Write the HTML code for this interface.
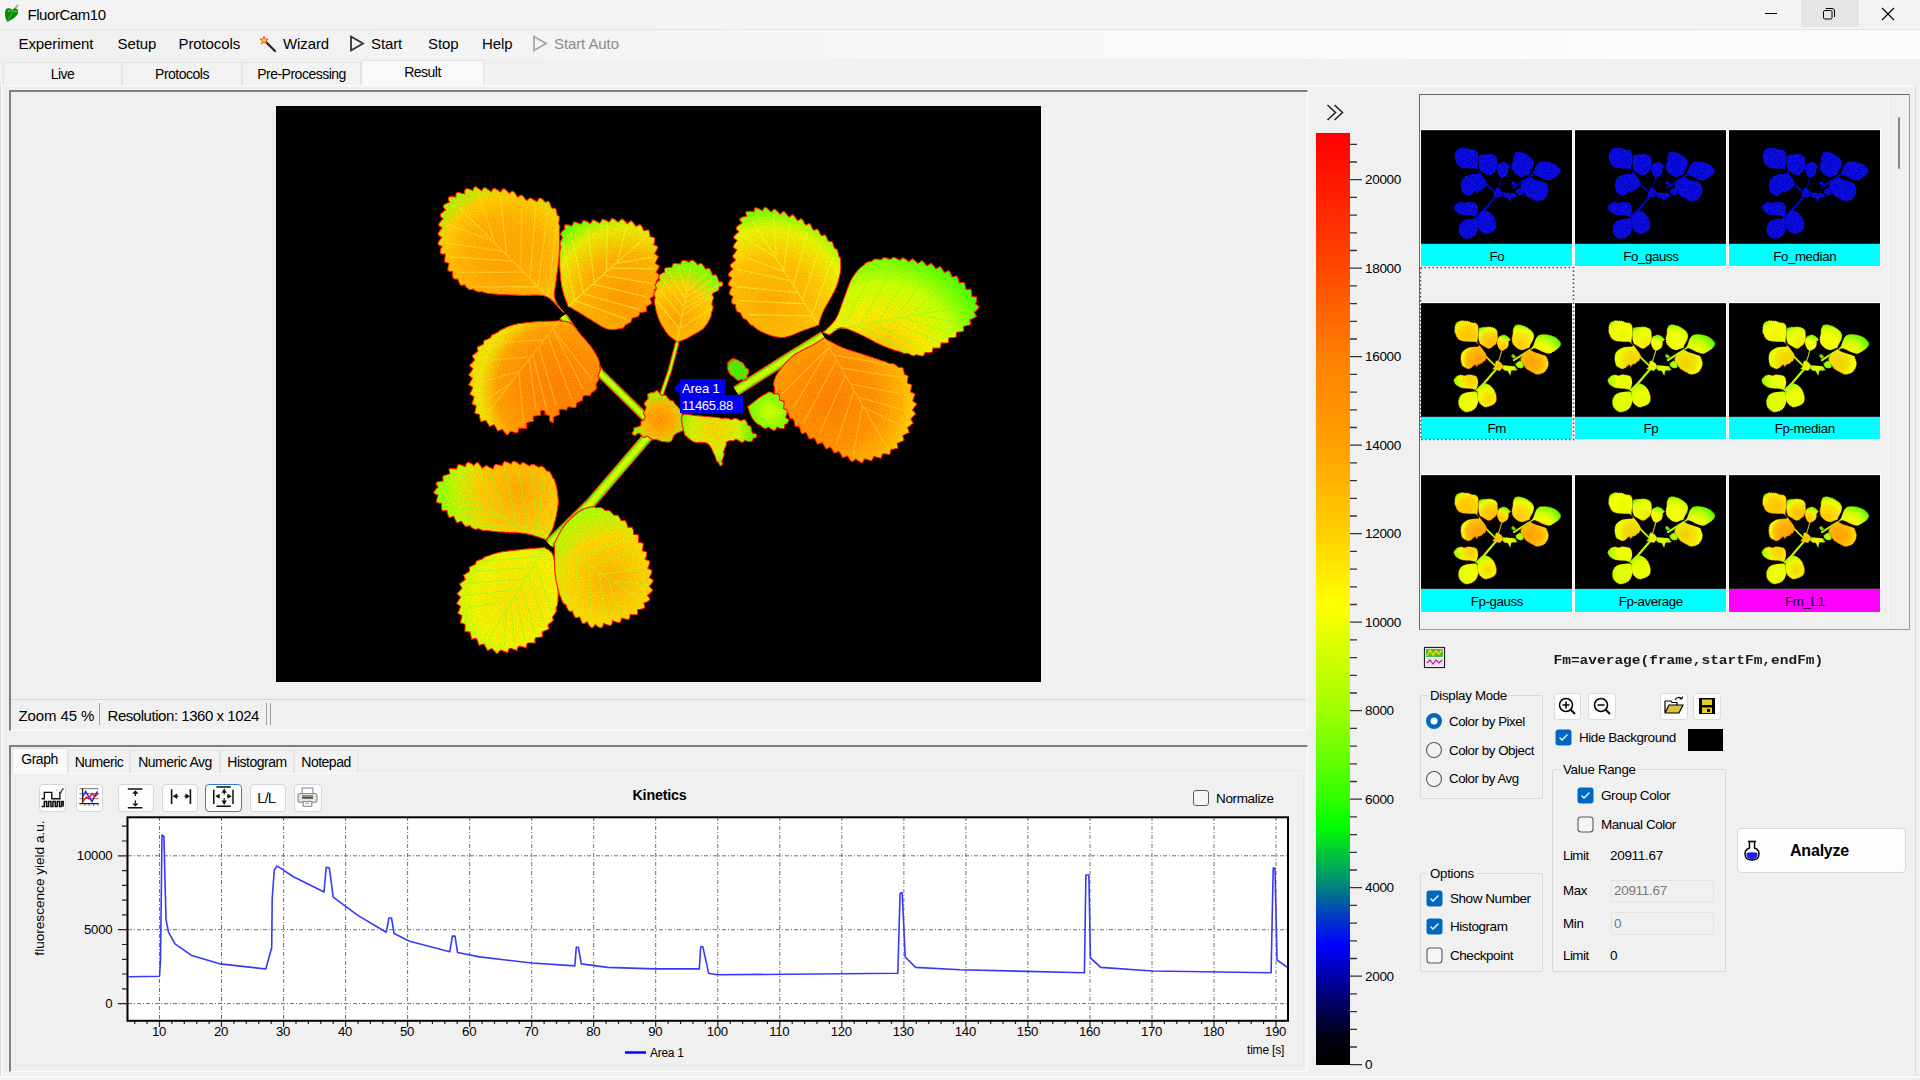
<!DOCTYPE html><html><head><meta charset="utf-8"><style>
html,body{margin:0;padding:0;}
body{width:1920px;height:1080px;overflow:hidden;position:relative;background:#f0f0f0;font-family:"Liberation Sans", sans-serif;}
.t{position:absolute;white-space:nowrap;line-height:1;}
.b{position:absolute;box-sizing:border-box;}
svg{position:absolute;overflow:visible;}
</style></head><body>
<svg width="0" height="0" style="position:absolute;left:0;top:0"><defs>
<radialGradient id="gA" gradientUnits="userSpaceOnUse" cx="229" cy="154" r="78"><stop offset="0" stop-color="#ffa000"/><stop offset="0.55" stop-color="#ffb000"/><stop offset="0.8" stop-color="#ffc800"/><stop offset="1" stop-color="#b0f000"/></radialGradient>
<radialGradient id="gB" gradientUnits="userSpaceOnUse" cx="349" cy="194" r="90"><stop offset="0" stop-color="#ff9800"/><stop offset="0.5" stop-color="#ffb000"/><stop offset="0.8" stop-color="#e8e800"/><stop offset="1" stop-color="#70ff00"/></radialGradient>
<radialGradient id="gC" gradientUnits="userSpaceOnUse" cx="284" cy="284" r="80"><stop offset="0" stop-color="#ff8000"/><stop offset="0.5" stop-color="#ff8c00"/><stop offset="0.8" stop-color="#ffa000"/><stop offset="1" stop-color="#f0e000"/></radialGradient>
<radialGradient id="gS" gradientUnits="userSpaceOnUse" cx="402" cy="214" r="55"><stop offset="0" stop-color="#ffa000"/><stop offset="0.6" stop-color="#ffc800"/><stop offset="1" stop-color="#80ff00"/></radialGradient>
<radialGradient id="gD" gradientUnits="userSpaceOnUse" cx="494" cy="199" r="95"><stop offset="0" stop-color="#ffa800"/><stop offset="0.5" stop-color="#ffc000"/><stop offset="0.8" stop-color="#e8f000"/><stop offset="1" stop-color="#70ff00"/></radialGradient>
<radialGradient id="gE" gradientUnits="userSpaceOnUse" cx="604" cy="254" r="110"><stop offset="0" stop-color="#ffb000"/><stop offset="0.4" stop-color="#f8e800"/><stop offset="0.7" stop-color="#c8ff00"/><stop offset="1" stop-color="#50ff00"/></radialGradient>
<radialGradient id="gF" gradientUnits="userSpaceOnUse" cx="554" cy="294" r="90"><stop offset="0" stop-color="#ff8000"/><stop offset="0.5" stop-color="#ff9000"/><stop offset="0.8" stop-color="#ffb000"/><stop offset="1" stop-color="#f8e000"/></radialGradient>
<radialGradient id="gG" gradientUnits="userSpaceOnUse" cx="244" cy="384" r="80"><stop offset="0" stop-color="#ffa800"/><stop offset="0.5" stop-color="#ffc800"/><stop offset="0.8" stop-color="#c8f000"/><stop offset="1" stop-color="#90ff00"/></radialGradient>
<radialGradient id="gH" gradientUnits="userSpaceOnUse" cx="244" cy="494" r="75"><stop offset="0" stop-color="#f8e000"/><stop offset="0.6" stop-color="#f0f000"/><stop offset="1" stop-color="#a8ff00"/></radialGradient>
<radialGradient id="gI" gradientUnits="userSpaceOnUse" cx="334" cy="474" r="75"><stop offset="0" stop-color="#ffb000"/><stop offset="0.6" stop-color="#f8d800"/><stop offset="1" stop-color="#a0ff00"/></radialGradient>
<radialGradient id="gsl" gradientUnits="userSpaceOnUse" cx="494" cy="306" r="25"><stop offset="0" stop-color="#d0ff00"/><stop offset="1" stop-color="#60ff00"/></radialGradient>
<radialGradient id="gbud" gradientUnits="userSpaceOnUse" cx="462" cy="264" r="15"><stop offset="0" stop-color="#40f000"/><stop offset="0.6" stop-color="#60e000"/><stop offset="1" stop-color="#ff3000"/></radialGradient>
<radialGradient id="gcrown" gradientUnits="userSpaceOnUse" cx="384" cy="314" r="26"><stop offset="0" stop-color="#ff9000"/><stop offset="0.6" stop-color="#ffb000"/><stop offset="1" stop-color="#a0f000"/></radialGradient>
<radialGradient id="gcrown2" gradientUnits="userSpaceOnUse" cx="439" cy="324" r="40"><stop offset="0" stop-color="#f8d000"/><stop offset="0.6" stop-color="#d0f000"/><stop offset="1" stop-color="#60f000"/></radialGradient>
<g id="plantMain">
<path d="M287.0,210.0 L324.0,267.0 L372.0,314.0" fill="none" stroke="#ff1c00" stroke-width="9.5" stroke-linecap="butt"/>
<path d="M287.0,210.0 L324.0,267.0 L372.0,314.0" fill="none" stroke="#60f000" stroke-width="7.1" stroke-linecap="butt"/>
<path d="M287.0,210.0 L324.0,267.0 L372.0,314.0" fill="none" stroke="#d0f800" stroke-width="4.26" stroke-linecap="butt"/>
<path d="M401.4,235.9 L394.0,264.0 L385.0,290.0" fill="none" stroke="#ff1c00" stroke-width="5" stroke-linecap="butt"/>
<path d="M401.4,235.9 L394.0,264.0 L385.0,290.0" fill="none" stroke="#60f000" stroke-width="2.6" stroke-linecap="butt"/>
<path d="M401.4,235.9 L394.0,264.0 L385.0,290.0" fill="none" stroke="#d0f800" stroke-width="1.56" stroke-linecap="butt"/>
<path d="M547.5,230.0 L512.0,252.0 L460.0,285.0" fill="none" stroke="#ff1c00" stroke-width="11" stroke-linecap="butt"/>
<path d="M547.5,230.0 L512.0,252.0 L460.0,285.0" fill="none" stroke="#60f000" stroke-width="8.6" stroke-linecap="butt"/>
<path d="M547.5,230.0 L512.0,252.0 L460.0,285.0" fill="none" stroke="#d0f800" stroke-width="5.159999999999999" stroke-linecap="butt"/>
<path d="M273.0,438.0 L314.2,397.7 L374.0,328.0" fill="none" stroke="#ff1c00" stroke-width="11.5" stroke-linecap="butt"/>
<path d="M273.0,438.0 L314.2,397.7 L374.0,328.0" fill="none" stroke="#60f000" stroke-width="9.1" stroke-linecap="butt"/>
<path d="M273.0,438.0 L314.2,397.7 L374.0,328.0" fill="none" stroke="#d0f800" stroke-width="5.46" stroke-linecap="butt"/>
<path d="M287.5,206.2 L288.6,207.3 L288.0,206.7 L286.9,205.6 L285.8,204.4 L284.8,203.2 L283.8,202.0 L282.7,200.8 L281.7,199.6 L280.6,198.4 L279.5,197.3 L278.4,196.1 L277.2,195.1 L276.0,194.0 L274.8,193.0 L273.5,192.1 L272.1,191.3 L270.7,190.7 L269.1,190.2 L267.6,189.8 L266.0,189.5 L264.5,189.3 L262.9,189.2 L261.3,189.2 L259.7,189.2 L258.1,189.2 L256.5,189.2 L254.9,189.3 L253.3,189.3 L251.8,189.4 L250.2,189.4 L248.6,189.5 L247.0,189.5 L245.4,189.4 L243.8,189.4 L242.2,189.3 L240.6,189.2 L239.1,189.2 L237.5,189.1 L235.9,189.1 L234.3,189.0 L232.7,189.0 L231.1,188.9 L229.5,188.8 L227.9,188.8 L226.4,188.7 L224.8,188.6 L223.2,188.5 L221.6,188.4 L220.0,188.2 L218.4,188.1 L216.9,187.9 L215.3,187.6 L213.7,187.5 L212.1,187.5 L210.5,187.2 L209.0,186.8 L207.4,186.4 L205.9,185.8 L204.3,186.0 L202.6,186.1 L201.1,185.6 L199.6,184.9 L198.2,184.1 L196.9,183.1 L195.1,183.5 L193.3,183.7 L192.0,182.8 L190.7,181.6 L189.6,180.3 L188.7,178.9 L186.6,179.3 L184.7,179.3 L183.7,177.9 L182.8,176.4 L182.2,174.8 L181.8,173.1 L179.4,173.2 L177.3,172.8 L176.8,171.1 L176.6,169.4 L176.5,167.5 L176.7,165.6 L173.9,165.4 L171.8,164.7 L171.7,162.9 L172.0,161.1 L172.4,159.3 L173.0,157.4 L170.1,156.7 L168.3,155.6 L168.5,153.9 L168.8,152.1 L169.0,150.2 L169.2,148.1 L166.2,148.1 L164.2,147.4 L164.1,145.6 L164.3,143.7 L165.0,142.0 L165.9,140.4 L163.1,139.2 L161.8,137.6 L162.5,136.0 L163.4,134.4 L164.4,132.8 L165.6,131.3 L162.9,129.6 L161.8,128.0 L162.6,126.4 L163.6,124.9 L164.7,123.4 L166.0,121.9 L163.3,120.1 L162.4,118.4 L163.3,116.9 L164.4,115.4 L165.7,114.0 L167.1,112.7 L164.6,110.6 L164.0,108.8 L165.1,107.4 L166.4,106.2 L167.9,105.0 L169.5,103.9 L167.3,101.4 L167.1,99.6 L168.4,98.4 L170.0,97.5 L171.7,96.7 L173.5,96.1 L172.0,93.0 L172.5,91.2 L174.2,90.7 L176.1,90.5 L177.9,90.7 L179.7,91.1 L179.9,87.7 L181.1,86.3 L182.9,86.5 L184.7,86.9 L186.6,87.3 L188.6,87.7 L188.7,84.1 L189.8,82.7 L191.6,82.7 L193.4,83.0 L195.1,83.7 L196.6,84.5 L197.9,81.2 L199.5,80.5 L201.1,81.3 L202.7,82.4 L204.1,83.6 L205.6,84.7 L207.5,81.7 L209.2,81.3 L210.6,82.3 L212.1,83.4 L213.6,84.6 L215.2,85.6 L217.0,82.6 L218.6,82.1 L220.1,82.9 L221.7,83.9 L223.2,85.1 L224.7,85.9 L226.5,82.9 L228.2,82.6 L229.7,83.6 L231.0,84.8 L232.3,86.3 L233.5,87.3 L236.0,85.0 L237.6,85.2 L238.8,86.6 L239.8,88.2 L240.8,89.9 L242.0,91.0 L244.7,89.0 L246.3,89.3 L247.4,90.6 L248.6,92.0 L249.8,93.5 L251.3,94.3 L253.6,91.9 L255.1,92.0 L256.6,93.0 L258.1,94.0 L259.8,95.0 L261.5,95.2 L262.7,92.3 L264.4,91.9 L266.0,92.7 L267.4,93.8 L268.3,95.2 L269.4,96.1 L272.1,95.0 L273.4,96.1 L274.1,97.6 L274.7,99.3 L275.2,101.0 L276.3,102.2 L278.8,102.0 L280.0,103.1 L280.6,104.7 L280.9,106.3 L281.0,107.9 L281.5,109.3 L283.3,110.6 L283.5,112.1 L283.3,113.8 L283.1,115.4 L282.8,117.0 L283.0,118.6 L283.9,120.1 L283.9,121.7 L283.7,123.3 L283.5,124.9 L283.4,126.5 L283.5,128.1 L283.8,129.7 L283.8,131.3 L283.7,132.8 L283.7,134.4 L283.7,136.0 L283.6,137.6 L283.6,139.2 L283.6,140.8 L283.5,142.4 L283.4,144.0 L283.4,145.5 L283.3,147.1 L283.2,148.7 L283.1,150.3 L283.0,151.9 L282.9,153.5 L282.7,155.1 L282.5,156.6 L282.4,158.2 L282.2,159.8 L282.0,161.4 L281.8,162.9 L281.6,164.5 L281.4,166.1 L281.1,167.7 L280.9,169.2 L280.7,170.8 L280.5,172.4 L280.3,174.0 L280.1,175.5 L279.9,177.1 L279.7,178.7 L279.5,180.3 L279.2,181.8 L278.9,183.4 L278.7,185.0 L278.4,186.5 L278.3,188.1 L278.4,189.7 L278.6,191.3 L279.1,192.8 L279.7,194.3 L280.4,195.7 L281.2,197.1 L282.0,198.4 L282.9,199.8 L283.7,201.1 L284.6,202.5 L285.5,203.7 L286.5,205.0Z" fill="url(#gA)" stroke="#ff1800" stroke-width="1.2"/>
<path d="M287.5,206.2 L182.7,101.0 M262.1,180.7 L196.2,180.8 M247.7,166.2 L181.6,166.3 M236.5,154.9 L174.6,151.0 M226.9,145.3 L169.4,136.9 M216.8,135.2 L169.4,116.8 M218.6,137.0 L202.6,87.3 M230.7,149.1 L224.2,90.0 M245.1,163.6 L245.6,97.6 M254.0,172.6 L259.7,101.3 M262.0,180.6 L271.9,105.2 M271.9,190.5 L281.0,115.9" stroke="#ffe040" stroke-opacity="0.5" stroke-width="1.3" fill="none"/>
<path d="M292.0,200.3 L291.9,201.3 L292.0,200.3 L291.5,198.8 L290.9,197.3 L290.3,195.8 L289.8,194.4 L289.2,192.9 L288.7,191.4 L288.1,189.9 L287.6,188.4 L287.2,186.9 L286.7,185.3 L286.4,183.8 L286.0,182.3 L285.7,180.7 L285.4,179.1 L285.2,177.6 L285.0,176.0 L284.8,174.4 L284.6,172.9 L284.4,171.3 L284.3,169.7 L284.1,168.1 L284.0,166.5 L283.9,165.0 L283.8,163.4 L283.7,161.8 L283.7,160.2 L283.6,158.6 L283.6,157.0 L283.6,155.5 L283.6,153.9 L283.6,152.3 L283.7,150.7 L283.7,149.1 L283.6,147.5 L283.7,145.9 L283.9,144.4 L284.3,142.8 L284.8,141.3 L284.5,139.7 L283.8,138.0 L284.1,136.4 L284.7,134.9 L285.5,133.4 L286.3,131.9 L285.8,130.2 L284.4,128.5 L285.0,126.9 L285.9,125.5 L287.1,124.3 L288.6,123.6 L288.6,121.8 L288.4,119.1 L290.2,118.7 L292.0,118.8 L293.8,119.2 L295.6,119.9 L296.7,118.2 L297.8,115.7 L299.5,116.0 L301.2,116.6 L303.0,117.3 L304.7,118.1 L306.0,116.5 L307.3,114.1 L309.0,114.6 L310.6,115.3 L312.3,116.3 L313.9,117.4 L315.4,115.9 L316.9,113.6 L318.5,114.2 L320.1,115.0 L321.8,115.9 L323.5,116.9 L325.0,115.3 L326.3,113.0 L327.9,113.4 L329.6,114.1 L331.3,115.0 L333.0,116.0 L334.4,114.4 L335.9,112.1 L337.5,112.7 L339.1,113.6 L340.6,114.7 L342.1,116.0 L343.8,114.6 L345.6,112.7 L347.1,113.6 L348.5,114.7 L349.9,116.0 L351.2,117.4 L353.0,116.3 L355.1,114.6 L356.5,115.7 L357.7,117.1 L358.8,118.6 L359.8,120.2 L361.8,119.4 L364.2,118.2 L365.3,119.5 L366.3,121.1 L367.1,122.8 L367.7,124.6 L369.9,124.2 L372.5,123.6 L373.3,125.1 L373.7,126.9 L374.0,128.7 L374.0,130.6 L376.1,131.0 L378.7,131.3 L378.9,133.1 L378.8,134.9 L378.4,136.7 L377.7,138.5 L379.7,139.5 L382.0,140.7 L381.5,142.4 L380.7,144.1 L379.8,145.7 L378.6,147.3 L380.3,148.8 L382.4,150.3 L381.9,151.9 L381.1,153.6 L380.3,155.3 L379.3,157.0 L381.2,158.4 L383.4,159.7 L382.9,161.4 L382.1,163.0 L381.2,164.7 L380.1,166.3 L381.9,167.8 L384.0,169.3 L383.4,170.9 L382.6,172.5 L381.5,174.1 L380.3,175.6 L381.9,177.2 L383.6,179.1 L382.6,180.6 L381.3,181.9 L379.8,183.0 L378.2,183.9 L379.1,186.1 L380.2,188.4 L378.9,189.5 L377.4,190.5 L375.8,191.5 L374.1,192.5 L375.1,194.7 L376.2,196.9 L374.9,198.1 L373.4,199.1 L371.7,200.0 L370.1,200.7 L370.6,202.9 L370.8,205.2 L369.1,205.9 L367.4,206.3 L365.7,206.6 L364.0,206.7 L363.3,208.7 L362.6,210.6 L361.0,211.0 L359.4,211.4 L357.7,211.9 L356.2,212.5 L355.6,214.3 L355.0,216.0 L353.6,216.9 L352.2,217.7 L350.8,218.4 L349.4,219.1 L348.5,220.6 L347.4,221.9 L345.8,222.3 L344.3,222.7 L342.7,222.9 L341.1,223.1 L339.6,223.6 L338.1,223.9 L336.5,223.8 L334.9,223.7 L333.3,223.5 L331.8,223.2 L330.2,222.7 L328.8,222.1 L327.3,221.5 L325.9,220.7 L324.6,219.9 L323.2,219.1 L321.9,218.3 L320.5,217.4 L319.2,216.6 L317.8,215.7 L316.5,214.9 L315.1,214.1 L313.8,213.3 L312.4,212.5 L311.1,211.7 L309.7,210.8 L308.4,210.0 L307.0,209.1 L305.7,208.3 L304.3,207.5 L303.0,206.6 L301.6,205.8 L300.3,205.0 L298.9,204.2 L297.5,203.4 L296.2,202.6 L294.8,201.8 L293.4,201.1Z" fill="url(#gB)" stroke="#ff1800" stroke-width="1.2"/>
<path d="M292.0,200.3 L367.4,132.9 M298.6,194.4 L286.6,136.3 M307.2,186.7 L294.7,125.1 M318.4,176.7 L311.4,121.4 M330.5,165.9 L331.1,119.1 M341.2,156.3 L350.7,119.4 M340.0,157.4 L376.9,151.1 M334.6,162.2 L377.5,162.6 M326.7,169.2 L376.7,177.7 M316.8,178.1 L370.8,190.9 M306.2,187.6 L362.7,203.4 M298.6,194.4 L349.7,212.8" stroke="#e8ff40" stroke-opacity="0.5" stroke-width="1.3" fill="none"/>
<path d="M282.7,214.8 L283.5,214.6 L283.5,214.8 L282.0,214.8 L280.4,214.9 L278.8,214.9 L277.2,215.0 L275.6,215.0 L274.0,215.1 L272.5,215.1 L270.9,215.2 L269.3,215.2 L267.7,215.3 L266.1,215.4 L264.5,215.4 L262.9,215.5 L261.4,215.6 L259.8,215.7 L258.2,215.8 L256.6,216.0 L255.0,216.1 L253.5,216.3 L251.9,216.4 L250.3,216.6 L248.7,216.8 L247.2,217.0 L245.6,217.2 L244.0,217.4 L242.4,217.7 L240.9,218.0 L239.3,218.3 L237.8,218.7 L236.3,219.1 L234.8,219.6 L233.3,220.1 L231.8,220.6 L230.3,221.3 L228.9,221.9 L227.4,222.6 L226.0,223.3 L224.6,224.0 L223.2,224.8 L222.0,225.9 L220.7,226.7 L219.2,227.4 L217.8,228.1 L216.2,228.7 L215.2,229.9 L214.4,231.5 L213.0,232.3 L211.5,233.0 L210.0,233.6 L208.3,234.1 L207.6,235.8 L207.4,237.8 L206.0,238.7 L204.5,239.4 L202.9,240.1 L201.2,240.9 L201.2,242.9 L201.8,245.1 L200.6,246.3 L199.2,247.3 L197.7,248.4 L196.1,249.6 L197.0,251.6 L198.6,253.7 L197.5,255.1 L196.3,256.4 L194.9,257.7 L193.5,259.1 L194.9,261.0 L196.7,262.8 L195.9,264.3 L194.8,265.8 L193.7,267.3 L192.5,268.9 L194.2,270.5 L196.2,272.1 L195.5,273.7 L194.6,275.3 L193.7,276.9 L192.6,278.6 L194.4,280.1 L196.6,281.5 L196.0,283.1 L195.3,284.8 L194.5,286.5 L193.6,288.3 L195.7,289.6 L197.9,290.8 L197.5,292.4 L197.0,294.2 L196.4,296.0 L195.7,297.8 L197.8,298.9 L200.1,299.9 L199.8,301.6 L199.4,303.4 L199.0,305.3 L198.5,307.2 L200.9,308.0 L203.3,308.5 L203.5,310.1 L203.7,311.9 L204.1,313.8 L204.8,315.8 L207.2,315.2 L209.5,314.5 L210.5,315.8 L211.6,317.3 L212.5,319.0 L213.4,320.7 L215.7,319.6 L218.0,318.8 L219.0,320.2 L219.9,321.8 L220.8,323.5 L221.6,325.3 L224.0,324.3 L226.2,323.4 L227.3,324.7 L228.4,326.1 L229.7,327.6 L231.3,329.1 L233.2,327.2 L234.6,325.3 L236.1,325.8 L237.9,326.3 L239.8,326.7 L241.8,327.2 L242.4,324.6 L243.0,322.4 L244.7,322.2 L246.6,322.3 L248.5,322.3 L250.6,322.2 L250.4,319.5 L250.4,317.2 L252.0,316.5 L253.7,316.0 L255.6,315.7 L257.5,315.6 L257.3,312.9 L257.5,310.6 L259.1,310.1 L260.9,309.8 L262.8,309.5 L264.7,309.5 L264.6,306.8 L265.2,304.6 L267.1,304.6 L268.8,305.5 L269.0,307.0 L268.7,308.7 L271.4,309.1 L273.5,309.9 L273.5,311.6 L273.4,313.4 L274.0,315.6 L277.4,316.6 L277.5,313.6 L277.3,311.5 L278.8,310.6 L280.4,309.8 L282.2,309.1 L283.9,308.5 L283.1,305.9 L283.3,303.8 L285.1,303.2 L286.9,303.3 L288.6,303.7 L290.3,304.4 L291.5,302.1 L292.9,300.7 L294.5,301.1 L296.2,301.5 L298.1,301.7 L300.1,301.6 L300.3,299.0 L300.7,297.1 L302.1,296.4 L303.7,295.6 L305.3,294.9 L306.8,294.2 L306.7,291.9 L307.3,290.2 L309.0,289.6 L310.7,289.5 L312.4,289.7 L314.1,290.0 L315.1,287.9 L316.0,286.4 L317.3,285.7 L318.6,284.7 L319.8,283.5 L321.0,282.1 L320.2,280.2 L320.1,278.5 L320.8,277.1 L321.6,275.6 L322.4,274.2 L323.1,272.7 L322.5,270.9 L322.4,269.3 L323.0,267.8 L323.5,266.3 L324.0,264.7 L324.4,263.2 L324.0,261.5 L323.8,260.0 L323.8,258.4 L323.6,256.8 L323.2,255.3 L322.7,253.8 L322.1,252.3 L321.4,250.9 L320.7,249.5 L319.9,248.1 L319.1,246.7 L318.3,245.4 L317.4,244.0 L316.5,242.7 L315.6,241.4 L314.7,240.1 L313.7,238.9 L312.7,237.6 L311.7,236.4 L310.7,235.2 L309.6,234.0 L308.6,232.8 L307.5,231.6 L306.5,230.5 L305.4,229.3 L304.4,228.1 L303.4,226.8 L302.4,225.6 L301.4,224.3 L300.5,223.1 L299.5,221.8 L298.5,220.6 L297.4,219.4 L296.3,218.3 L295.0,217.4 L293.6,216.6 L292.1,216.1 L290.6,215.7 L289.0,215.4 L287.4,215.2 L285.9,215.1 L284.3,215.0Z" fill="url(#gC)" stroke="#ff1800" stroke-width="1.2"/>
<path d="M282.7,214.8 L212.2,305.9 M267.9,233.9 L212.8,236.9 M254.9,250.7 L202.3,255.6 M243.5,265.4 L199.8,277.2 M234.1,277.6 L202.4,298.7 M242.8,266.4 L247.5,315.6 M253.2,253.0 L260.0,303.9 M256.6,248.5 L271.2,305.5 M262.7,240.7 L280.4,300.0 M271.7,229.0 L295.7,293.2 M276.6,222.7 L307.1,282.7 M276.6,222.7 L316.1,273.6" stroke="#ffd040" stroke-opacity="0.5" stroke-width="1.3" fill="none"/>
<path d="M401.4,235.9 L401.7,236.2 L400.4,235.2 L399.1,234.4 L397.8,233.5 L396.5,232.6 L395.2,231.6 L394.0,230.6 L392.8,229.5 L391.7,228.3 L390.8,227.1 L389.8,225.8 L388.9,224.5 L388.0,223.2 L387.2,221.8 L386.3,220.5 L385.5,219.1 L384.8,217.7 L384.1,216.2 L383.4,214.8 L382.8,213.3 L382.2,211.9 L381.7,210.4 L381.2,208.8 L380.7,207.3 L380.3,205.8 L379.9,204.3 L379.6,202.7 L379.4,201.1 L379.0,199.6 L378.4,198.0 L378.3,196.4 L378.4,194.8 L378.6,193.2 L379.1,191.7 L378.4,190.1 L377.7,188.4 L378.1,186.8 L378.8,185.3 L379.6,183.9 L380.7,182.5 L379.8,180.7 L379.2,178.8 L380.1,177.4 L381.2,176.1 L382.4,174.9 L383.8,173.8 L382.9,171.7 L382.7,169.8 L383.9,168.6 L385.3,167.6 L386.8,166.7 L388.4,166.1 L388.2,163.8 L388.9,162.1 L390.5,161.5 L392.2,161.3 L394.0,161.2 L395.7,161.2 L396.4,159.0 L397.5,157.5 L399.2,157.4 L400.9,157.5 L402.7,157.6 L404.5,157.8 L405.3,155.5 L406.6,154.3 L408.3,154.4 L410.0,154.7 L411.6,155.3 L413.0,156.2 L414.8,154.3 L416.5,153.9 L418.0,154.9 L419.3,156.0 L420.5,157.2 L421.6,158.6 L423.9,157.3 L425.6,157.5 L426.8,158.7 L427.8,160.1 L428.8,161.5 L429.5,163.1 L432.1,162.2 L433.7,162.8 L434.6,164.3 L435.3,165.8 L436.0,167.5 L436.6,169.1 L439.3,168.6 L440.7,169.5 L441.4,171.0 L442.0,172.6 L442.6,174.3 L443.2,175.9 L445.8,175.7 L447.0,177.0 L446.9,178.8 L446.0,180.2 L444.5,180.7 L443.1,181.1 L442.9,183.8 L441.8,185.0 L440.3,185.5 L438.6,186.1 L437.0,187.2 L436.1,188.7 L437.6,190.8 L437.6,192.3 L437.0,193.9 L436.5,195.5 L436.1,197.1 L436.0,198.7 L437.2,200.3 L437.2,201.9 L436.8,203.5 L436.3,205.0 L435.7,206.5 L435.3,208.0 L435.3,209.7 L434.7,211.1 L434.0,212.6 L433.3,214.0 L432.6,215.4 L431.8,216.8 L430.9,218.2 L430.0,219.5 L429.0,220.7 L428.0,221.9 L426.8,223.0 L425.5,223.9 L424.2,224.8 L422.9,225.7 L421.5,226.5 L420.1,227.3 L418.7,228.1 L417.3,228.8 L416.0,229.6 L414.6,230.4 L413.2,231.2 L411.8,232.0 L410.4,232.7 L408.9,233.4 L407.5,234.0 L406.0,234.6 L404.5,235.1 L403.0,235.5Z" fill="url(#gS)" stroke="#ff1800" stroke-width="1.2"/>
<path d="M401.4,235.9 L414.6,161.2 M403.7,223.0 L380.8,194.8 M405.8,211.0 L382.5,182.7 M407.6,200.7 L386.2,172.8 M409.1,192.4 L392.1,165.2 M410.3,185.8 L401.7,160.2 M410.1,186.6 L431.4,166.2 M409.2,191.9 L437.5,172.8 M408.2,197.5 L442.5,179.4 M407.3,202.8 L440.3,184.5 M406.1,209.6 L434.5,190.5 M403.7,222.7 L433.5,203.8" stroke="#f0f040" stroke-opacity="0.5" stroke-width="1.3" fill="none"/>
<path d="M542.6,219.0 L543.3,219.4 L542.6,219.0 L541.1,219.5 L539.7,220.1 L538.2,220.7 L536.7,221.2 L535.2,221.8 L533.7,222.3 L532.2,222.9 L530.7,223.4 L529.2,223.9 L527.7,224.5 L526.2,225.0 L524.7,225.6 L523.3,226.2 L521.8,226.8 L520.3,227.5 L518.9,228.1 L517.4,228.7 L515.9,229.3 L514.4,229.8 L512.9,230.3 L511.4,230.7 L509.8,231.1 L508.3,231.3 L506.7,231.5 L505.1,231.5 L503.5,231.4 L501.9,231.2 L500.4,231.0 L498.8,230.7 L497.3,230.3 L495.7,229.9 L494.2,229.4 L492.7,228.9 L491.2,228.3 L489.8,227.7 L488.3,227.1 L486.8,226.4 L485.4,225.8 L484.0,225.0 L482.6,224.2 L481.3,223.4 L480.0,222.5 L478.7,221.5 L477.6,220.4 L476.2,219.6 L474.7,218.9 L473.6,217.8 L472.5,216.6 L471.5,215.3 L470.6,213.9 L469.0,213.3 L467.4,212.6 L466.5,211.3 L465.7,209.9 L465.0,208.4 L464.4,206.8 L462.6,206.3 L460.9,205.6 L460.2,204.1 L459.8,202.5 L459.5,200.8 L459.5,199.0 L457.4,198.3 L455.8,197.3 L455.6,195.6 L455.8,193.9 L456.2,192.2 L456.8,190.5 L454.6,189.3 L453.1,187.9 L453.4,186.3 L454.0,184.6 L454.8,182.9 L455.7,181.3 L453.4,179.9 L451.9,178.3 L452.6,176.7 L453.5,175.1 L454.6,173.5 L455.8,172.0 L453.3,170.3 L452.1,168.6 L453.0,167.1 L454.1,165.6 L455.4,164.3 L456.9,163.1 L454.7,160.9 L454.0,159.0 L455.2,157.7 L456.6,156.5 L458.1,155.3 L459.6,154.0 L457.3,151.8 L456.5,150.0 L457.5,148.6 L458.6,147.1 L459.7,145.5 L460.9,143.9 L458.1,142.3 L457.1,140.7 L457.8,139.1 L458.8,137.5 L459.9,136.0 L461.1,134.5 L458.3,132.7 L457.6,131.0 L458.6,129.5 L459.9,128.2 L461.3,126.9 L462.8,125.7 L460.4,123.4 L460.0,121.6 L461.2,120.3 L462.7,119.1 L464.3,118.1 L465.9,117.1 L463.8,114.4 L463.8,112.6 L465.3,111.6 L467.0,110.8 L468.7,110.4 L470.6,110.1 L469.6,106.7 L470.6,105.2 L472.4,105.0 L474.2,105.1 L476.1,105.5 L477.8,106.0 L478.4,102.6 L479.8,101.6 L481.6,102.1 L483.3,102.8 L484.9,103.8 L486.3,104.7 L488.0,101.7 L489.7,101.2 L491.2,102.2 L492.6,103.4 L493.9,104.8 L495.3,105.9 L497.5,103.2 L499.2,103.1 L500.5,104.3 L501.8,105.6 L503.1,107.0 L504.4,108.1 L506.8,105.6 L508.5,105.6 L509.7,106.9 L510.9,108.3 L512.1,109.9 L513.3,110.9 L515.9,108.7 L517.5,108.9 L518.7,110.3 L519.7,111.8 L520.7,113.5 L521.9,114.6 L524.7,112.6 L526.2,113.1 L527.2,114.6 L528.1,116.3 L528.9,118.0 L530.0,119.1 L533.0,117.5 L534.4,118.2 L535.3,119.7 L536.1,121.4 L536.8,123.1 L538.0,124.2 L540.8,122.9 L542.2,123.7 L543.1,125.3 L543.9,126.8 L544.6,128.5 L545.9,129.5 L548.5,128.7 L549.8,129.6 L550.6,131.1 L551.4,132.7 L552.0,134.3 L553.1,135.3 L555.6,135.2 L556.6,136.5 L557.2,138.0 L557.7,139.6 L558.2,141.2 L559.1,142.5 L561.0,143.2 L561.7,144.6 L562.1,146.2 L562.4,147.8 L562.7,149.4 L563.3,150.8 L564.5,152.2 L564.8,153.7 L564.8,155.3 L564.8,156.9 L564.8,158.5 L564.9,160.1 L565.0,161.7 L564.8,163.3 L564.6,164.9 L564.4,166.4 L564.1,168.0 L563.8,169.6 L563.4,171.1 L563.0,172.6 L562.6,174.2 L562.2,175.7 L561.7,177.2 L561.2,178.7 L560.7,180.2 L560.1,181.7 L559.4,183.2 L558.8,184.6 L558.1,186.0 L557.3,187.4 L556.5,188.8 L555.8,190.2 L555.0,191.6 L554.2,193.0 L553.5,194.4 L552.7,195.8 L551.9,197.2 L551.1,198.5 L550.3,199.9 L549.5,201.3 L548.7,202.7 L548.0,204.1 L547.3,205.5 L546.6,206.9 L546.0,208.4 L545.5,209.9 L545.0,211.4 L544.5,212.9 L544.0,214.4 L543.5,216.0 L543.1,217.5Z" fill="url(#gD)" stroke="#ff1800" stroke-width="1.2"/>
<path d="M542.6,219.0 L476.6,115.5 M536.9,210.0 L471.4,208.5 M529.1,197.9 L463.0,194.5 M522.0,186.8 L460.2,180.6 M514.3,174.6 L460.5,163.3 M508.6,165.7 L463.2,149.0 M499.6,151.5 L463.9,128.7 M500.3,152.7 L497.6,108.8 M507.6,164.1 L513.9,114.5 M517.4,179.5 L531.7,124.8 M526.5,193.7 L545.9,135.7 M536.0,208.6 L557.7,149.2" stroke="#e8ff40" stroke-opacity="0.5" stroke-width="1.3" fill="none"/>
<path d="M547.3,226.2 L546.1,227.0 L547.3,226.2 L548.4,225.1 L549.5,224.0 L550.7,222.9 L551.8,221.8 L553.0,220.7 L554.1,219.6 L555.2,218.5 L556.2,217.3 L557.3,216.1 L558.3,214.9 L559.2,213.6 L560.0,212.2 L560.8,210.8 L561.5,209.4 L562.1,208.0 L562.7,206.5 L563.3,205.0 L563.8,203.5 L564.4,202.0 L564.9,200.5 L565.4,199.0 L565.9,197.5 L566.5,196.1 L567.1,194.6 L567.6,193.1 L568.2,191.6 L568.8,190.1 L569.3,188.6 L569.8,187.1 L570.3,185.7 L570.8,184.2 L571.4,182.7 L571.9,181.2 L572.5,179.7 L573.1,178.2 L573.7,176.8 L574.3,175.3 L575.0,173.9 L575.8,172.5 L576.6,171.1 L577.5,169.8 L578.4,168.5 L579.3,167.2 L580.3,166.0 L581.3,164.8 L582.3,163.5 L583.4,162.4 L584.6,161.3 L585.8,160.3 L587.2,159.5 L588.3,158.4 L589.3,157.1 L590.8,156.4 L592.3,155.8 L593.8,155.4 L595.4,155.2 L596.8,154.3 L598.1,153.1 L599.7,152.9 L601.3,153.0 L602.9,153.2 L604.6,153.6 L606.1,152.7 L607.5,151.4 L609.1,151.6 L610.8,152.0 L612.3,152.6 L613.9,153.3 L615.5,152.5 L617.1,151.1 L618.7,151.5 L620.3,152.2 L621.8,153.1 L623.3,154.1 L624.9,153.2 L626.7,151.6 L628.2,152.2 L629.7,153.1 L631.2,154.2 L632.6,155.4 L634.3,154.4 L636.2,152.6 L637.7,153.4 L639.1,154.6 L640.5,155.9 L641.8,157.3 L643.6,156.2 L645.7,154.4 L647.1,155.4 L648.4,156.7 L649.6,158.1 L650.8,159.7 L652.7,158.7 L654.9,157.1 L656.2,158.2 L657.4,159.5 L658.6,161.0 L659.7,162.6 L661.7,161.8 L663.9,160.3 L665.2,161.5 L666.3,163.0 L667.3,164.6 L668.2,166.3 L670.3,165.6 L672.7,164.4 L673.8,165.8 L674.7,167.4 L675.5,169.1 L676.1,170.9 L678.3,170.5 L680.8,169.8 L681.7,171.3 L682.3,173.0 L682.9,174.8 L683.3,176.7 L685.5,176.6 L688.1,176.1 L688.8,177.7 L689.3,179.5 L689.7,181.3 L690.0,183.2 L692.2,183.2 L694.8,183.0 L695.4,184.7 L695.7,186.5 L695.9,188.3 L695.9,190.2 L698.1,190.6 L700.7,190.9 L700.9,192.6 L700.8,194.4 L700.3,196.2 L699.4,197.8 L701.3,199.0 L703.3,200.7 L702.5,202.3 L701.3,203.7 L699.9,205.0 L698.3,206.0 L699.4,208.0 L700.5,210.3 L699.1,211.5 L697.5,212.3 L695.8,213.1 L694.0,213.6 L694.3,215.8 L694.8,218.4 L693.3,219.1 L691.5,219.7 L689.7,220.0 L687.8,220.2 L687.8,222.6 L687.8,225.1 L686.2,225.6 L684.4,225.9 L682.5,226.1 L680.6,226.2 L680.4,228.5 L680.3,231.0 L678.6,231.5 L676.8,231.7 L674.9,231.8 L673.0,231.8 L672.8,234.1 L672.6,236.7 L670.9,237.0 L669.1,237.1 L667.2,237.1 L665.2,237.0 L664.9,239.4 L664.5,241.9 L662.8,242.1 L661.0,242.1 L659.1,242.1 L657.3,242.0 L656.7,244.3 L656.1,246.4 L654.4,246.7 L652.7,246.8 L651.0,246.8 L649.2,246.6 L648.3,248.4 L647.1,250.1 L645.4,250.0 L643.7,249.7 L642.1,249.2 L640.6,248.6 L639.0,249.5 L637.3,250.1 L635.8,249.5 L634.3,248.8 L632.9,248.0 L631.5,247.3 L629.8,247.5 L628.1,247.6 L626.6,247.0 L625.1,246.4 L623.7,245.7 L622.2,245.2 L620.6,245.0 L619.1,244.6 L617.6,244.0 L616.1,243.5 L614.6,242.9 L613.1,242.4 L611.6,241.8 L610.2,241.2 L608.7,240.6 L607.2,240.0 L605.8,239.4 L604.3,238.8 L602.9,238.1 L601.5,237.4 L600.1,236.7 L598.6,235.9 L597.2,235.2 L595.9,234.4 L594.5,233.7 L593.1,232.9 L591.7,232.2 L590.3,231.5 L588.9,230.7 L587.4,230.0 L586.0,229.3 L584.6,228.7 L583.1,228.0 L581.7,227.4 L580.2,226.7 L578.8,226.1 L577.3,225.4 L575.9,224.8 L574.4,224.2 L572.9,223.6 L571.4,223.1 L569.9,222.6 L568.4,222.2 L566.8,221.9 L565.3,221.8 L563.7,222.0 L562.2,222.5 L560.8,223.2 L559.5,224.2 L558.3,225.2 L557.2,226.3 L556.0,227.3 L554.6,228.2 L553.1,228.5 L551.5,228.3 L550.1,227.8 L548.7,227.0Z" fill="url(#gE)" stroke="#ff1800" stroke-width="1.2"/>
<path d="M547.3,226.2 L689.3,199.5 M565.9,222.7 L600.0,159.6 M584.1,219.3 L618.9,159.0 M602.6,215.8 L638.4,161.2 M618.1,212.9 L655.2,165.4 M634.1,209.9 L673.2,173.3 M645.2,207.8 L686.7,184.0 M640.0,208.8 L687.6,217.4 M625.9,211.4 L674.9,227.4 M612.5,214.0 L662.6,235.5 M596.8,216.9 L647.8,243.6 M582.3,219.6 L633.4,246.7" stroke="#80ff30" stroke-opacity="0.5" stroke-width="1.3" fill="none"/>
<path d="M547.9,232.1 L548.4,231.7 L547.1,232.6 L545.8,233.5 L544.4,234.3 L543.1,235.2 L541.8,236.0 L540.4,236.9 L539.0,237.7 L537.7,238.5 L536.3,239.3 L534.9,240.0 L533.5,240.7 L532.1,241.4 L530.6,242.1 L529.2,242.8 L527.8,243.5 L526.4,244.2 L525.0,244.9 L523.6,245.7 L522.2,246.4 L520.8,247.3 L519.5,248.1 L518.2,249.1 L517.0,250.0 L515.7,251.0 L514.5,252.1 L513.4,253.1 L512.2,254.2 L511.1,255.3 L510.0,256.5 L508.9,257.6 L507.9,258.8 L506.8,260.0 L505.8,261.3 L504.9,262.5 L503.9,263.8 L503.0,265.1 L502.1,266.4 L501.2,267.7 L500.3,269.0 L499.6,270.4 L499.1,271.9 L498.6,273.4 L498.1,274.9 L497.7,276.5 L497.4,278.1 L497.7,279.7 L498.4,281.2 L498.5,282.8 L498.5,284.4 L498.6,286.0 L498.6,287.6 L499.5,289.0 L500.9,290.2 L501.2,291.8 L501.5,293.4 L501.8,295.0 L502.0,296.7 L503.4,297.8 L505.3,298.4 L505.9,299.9 L506.5,301.4 L507.1,303.0 L507.5,304.7 L509.1,305.4 L511.2,305.7 L512.0,307.2 L512.6,308.7 L513.1,310.4 L513.4,312.1 L515.1,312.8 L517.3,313.1 L517.9,314.7 L518.3,316.3 L518.6,318.1 L518.8,319.9 L520.6,320.6 L523.1,320.6 L523.7,322.1 L524.2,323.7 L524.7,325.5 L525.3,327.5 L527.3,327.5 L529.9,326.7 L530.8,328.1 L531.6,329.7 L532.4,331.4 L533.1,333.2 L535.2,332.9 L537.8,331.8 L538.8,333.1 L539.7,334.7 L540.6,336.4 L541.3,338.2 L543.4,337.8 L545.9,336.6 L547.0,337.9 L547.9,339.5 L548.8,341.1 L549.7,342.9 L551.8,342.4 L554.2,341.1 L555.3,342.4 L556.3,343.9 L557.3,345.5 L558.2,347.3 L560.2,346.7 L562.7,345.5 L563.8,346.8 L564.8,348.3 L565.7,350.0 L566.5,351.7 L568.6,351.2 L571.0,350.0 L572.2,351.2 L573.2,352.7 L574.3,354.2 L575.5,355.8 L577.6,354.9 L579.5,353.0 L580.9,353.9 L582.4,354.9 L584.0,355.9 L585.8,356.9 L587.3,355.3 L588.5,352.9 L590.1,353.2 L591.9,353.8 L593.7,354.4 L595.5,355.1 L596.7,353.3 L597.6,350.7 L599.3,350.9 L601.1,351.3 L602.9,351.8 L604.8,352.4 L605.8,350.5 L606.5,347.8 L608.2,347.9 L610.0,348.0 L611.9,348.3 L613.9,348.5 L614.5,346.4 L614.7,343.7 L616.3,343.3 L618.0,343.0 L619.9,342.7 L621.9,342.3 L621.9,340.1 L621.3,337.5 L622.8,336.7 L624.4,336.0 L626.2,335.3 L628.1,334.6 L627.7,332.5 L626.8,329.9 L628.2,329.0 L629.8,328.1 L631.5,327.3 L633.3,326.4 L632.7,324.3 L631.5,321.9 L632.7,320.8 L634.1,319.7 L635.7,318.5 L637.3,317.4 L636.3,315.4 L634.8,313.2 L635.8,311.9 L637.0,310.6 L638.4,309.3 L639.8,307.9 L638.6,306.0 L636.7,304.2 L637.5,302.7 L638.5,301.2 L639.6,299.6 L640.7,298.0 L639.1,296.4 L636.8,295.0 L637.2,293.5 L637.8,291.7 L638.4,289.9 L639.1,288.1 L637.1,287.0 L634.6,286.1 L634.8,284.4 L635.1,282.6 L635.5,280.8 L635.9,278.9 L633.9,278.0 L631.5,277.2 L631.5,275.5 L631.7,273.7 L632.0,272.0 L632.3,270.2 L630.5,269.1 L628.4,268.3 L628.2,266.7 L627.9,265.0 L627.5,263.3 L626.8,261.7 L624.8,261.4 L622.8,261.5 L621.6,260.5 L620.4,259.5 L619.0,258.5 L617.6,257.6 L615.9,257.7 L614.2,257.9 L612.8,257.2 L611.3,256.5 L609.9,255.8 L608.4,255.2 L606.9,254.9 L605.3,254.5 L603.8,253.9 L602.4,253.4 L600.9,252.9 L599.3,252.4 L597.8,251.9 L596.3,251.4 L594.8,250.9 L593.3,250.4 L591.8,249.9 L590.3,249.4 L588.8,248.9 L587.3,248.4 L585.8,247.9 L584.3,247.4 L582.8,247.0 L581.3,246.5 L579.8,246.0 L578.2,245.5 L576.7,245.1 L575.2,244.6 L573.7,244.1 L572.2,243.6 L570.7,243.1 L569.2,242.5 L567.7,242.0 L566.3,241.4 L564.8,240.7 L563.4,240.1 L562.0,239.4 L560.6,238.7 L559.2,237.9 L557.8,237.2 L556.4,236.4 L555.0,235.6 L553.6,234.9 L552.2,234.2 L550.7,233.5 L549.3,232.8Z" fill="url(#gF)" stroke="#ff1800" stroke-width="1.2"/>
<path d="M547.9,232.1 L608.3,337.0 M553.2,241.2 L506.3,287.3 M553.2,241.2 L517.1,302.5 M560.5,253.9 L527.7,316.6 M569.4,269.4 L543.0,328.4 M578.2,284.6 L560.1,338.7 M586.6,299.2 L577.2,348.3 M587.5,300.9 L627.7,321.4 M581.7,290.8 L632.1,305.4 M574.3,277.8 L631.0,288.9 M565.2,262.0 L624.6,271.5 M557.7,249.0 L615.8,259.3" stroke="#ffd040" stroke-opacity="0.5" stroke-width="1.3" fill="none"/>
<path d="M270.4,433.6 L271.1,434.6 L271.2,433.9 L269.7,433.4 L268.2,432.9 L266.7,432.4 L265.2,432.0 L263.7,431.5 L262.2,431.0 L260.7,430.5 L259.1,430.1 L257.6,429.6 L256.1,429.2 L254.5,428.8 L253.0,428.5 L251.4,428.1 L249.9,427.8 L248.3,427.6 L246.7,427.4 L245.2,427.2 L243.6,427.0 L242.0,426.9 L240.4,426.8 L238.8,426.7 L237.2,426.6 L235.7,426.6 L234.1,426.5 L232.5,426.4 L230.9,426.4 L229.3,426.3 L227.7,426.2 L226.1,426.2 L224.6,426.1 L223.0,426.0 L221.4,425.9 L219.8,425.7 L218.2,425.5 L216.7,425.4 L215.1,425.2 L213.5,425.0 L211.9,424.7 L210.3,424.6 L208.7,424.8 L207.2,424.5 L205.6,424.1 L204.1,423.5 L202.6,422.8 L201.0,423.1 L199.2,423.6 L197.7,422.9 L196.3,422.0 L195.0,421.0 L193.8,419.7 L192.0,420.1 L190.0,420.8 L188.7,419.8 L187.5,418.5 L186.5,417.0 L185.5,415.4 L183.4,416.0 L181.2,416.9 L180.1,415.5 L179.2,413.9 L178.4,412.2 L177.7,410.4 L175.4,411.1 L173.0,411.6 L172.2,410.0 L171.5,408.3 L171.1,406.5 L170.9,404.6 L168.4,404.7 L166.0,404.7 L165.5,403.0 L165.3,401.2 L165.3,399.3 L165.5,397.4 L162.9,397.1 L160.6,396.5 L160.5,394.7 L160.7,392.9 L161.2,391.1 L162.0,389.4 L159.6,388.3 L157.7,386.9 L158.4,385.2 L159.3,383.6 L160.6,382.3 L162.0,381.2 L160.5,379.1 L159.9,376.8 L161.5,375.9 L163.2,375.4 L165.1,375.1 L167.0,374.9 L166.7,372.2 L166.9,370.0 L168.4,369.4 L170.2,368.8 L172.0,368.2 L173.8,367.6 L173.0,365.0 L173.1,362.7 L174.9,362.3 L176.7,362.3 L178.6,362.6 L180.4,363.1 L181.1,360.4 L182.1,358.5 L183.9,358.7 L185.7,359.1 L187.4,359.8 L189.2,360.5 L190.2,357.8 L191.5,356.1 L193.3,356.6 L194.9,357.3 L196.6,358.3 L197.8,359.4 L199.7,357.2 L201.6,356.3 L202.9,357.5 L204.1,358.9 L205.1,360.5 L206.2,362.2 L208.6,360.3 L210.4,359.4 L211.8,360.3 L213.4,361.2 L215.1,362.0 L217.0,362.8 L218.0,359.9 L219.2,358.3 L220.9,358.5 L222.6,358.8 L224.4,359.2 L226.3,359.7 L227.0,357.0 L228.3,355.5 L230.0,355.8 L231.7,356.3 L233.4,357.0 L234.9,357.9 L236.5,355.7 L238.1,354.9 L239.7,355.6 L241.2,356.6 L242.6,357.5 L244.0,358.6 L245.9,356.9 L247.6,356.5 L249.1,357.3 L250.5,358.2 L252.0,359.0 L253.5,359.9 L255.3,358.4 L257.0,358.1 L258.5,358.7 L260.0,359.5 L261.4,360.3 L262.8,361.2 L264.7,360.2 L266.4,360.3 L267.7,361.3 L268.9,362.4 L269.9,363.6 L270.9,364.9 L272.8,365.1 L274.1,366.1 L274.9,367.5 L275.6,369.0 L276.3,370.4 L276.9,371.9 L278.1,373.0 L278.8,374.5 L279.2,376.0 L279.7,377.5 L280.1,379.0 L280.5,380.6 L280.8,382.1 L281.1,383.7 L281.4,385.3 L281.6,386.8 L281.8,388.4 L282.0,390.0 L282.1,391.6 L282.3,393.2 L282.3,394.7 L282.3,396.3 L282.3,397.9 L282.1,399.5 L281.9,401.1 L281.7,402.6 L281.4,404.2 L281.1,405.8 L280.8,407.3 L280.5,408.9 L280.2,410.4 L279.8,412.0 L279.5,413.5 L279.1,415.1 L278.7,416.6 L278.3,418.1 L277.8,419.7 L277.3,421.2 L276.8,422.7 L276.2,424.1 L275.5,425.5 L274.7,426.9 L273.9,428.3 L273.0,429.6 L272.2,431.0 L271.3,432.3Z" fill="url(#gG)" stroke="#ff1800" stroke-width="1.2"/>
<path d="M270.4,433.6 L169.3,382.8 M240.4,418.5 L199.4,421.3 M223.3,409.9 L182.2,412.8 M209.2,402.8 L170.0,402.0 M199.7,398.0 L163.6,390.9 M206.5,401.5 L186.0,363.6 M219.6,408.0 L202.8,362.5 M230.3,413.4 L214.5,366.2 M240.6,418.6 L229.0,363.0 M251.6,424.2 L242.7,363.1 M261.6,429.2 L255.8,365.6 M261.6,429.2 L267.7,368.6" stroke="#80ff30" stroke-opacity="0.5" stroke-width="1.3" fill="none"/>
<path d="M268.4,441.5 L269.3,441.0 L269.0,441.4 L267.4,441.6 L265.9,441.7 L264.3,441.8 L262.7,441.9 L261.1,442.0 L259.5,442.1 L257.9,442.3 L256.4,442.4 L254.8,442.5 L253.2,442.6 L251.6,442.8 L250.0,442.9 L248.4,443.1 L246.9,443.2 L245.3,443.4 L243.7,443.6 L242.1,443.8 L240.6,443.9 L239.0,444.1 L237.4,444.3 L235.8,444.5 L234.2,444.6 L232.7,444.8 L231.1,445.0 L229.5,445.3 L227.9,445.5 L226.4,445.7 L224.8,446.0 L223.3,446.3 L221.7,446.7 L220.2,447.1 L218.6,447.5 L217.1,448.0 L215.6,448.5 L214.1,449.1 L212.6,449.6 L211.1,450.0 L209.5,450.3 L208.2,451.3 L207.0,452.5 L205.5,453.1 L204.0,453.6 L202.4,454.1 L200.7,454.5 L199.9,456.1 L199.4,458.0 L198.0,458.7 L196.5,459.5 L194.9,460.2 L193.2,460.9 L193.2,463.0 L193.5,465.1 L192.3,466.1 L190.8,467.1 L189.2,468.0 L187.4,468.9 L188.2,471.1 L189.2,473.4 L187.9,474.5 L186.5,475.6 L184.9,476.7 L183.3,477.9 L184.6,480.0 L185.9,482.0 L184.9,483.4 L183.7,484.7 L182.3,486.1 L181.0,487.6 L182.7,489.4 L184.4,491.2 L183.6,492.7 L182.6,494.2 L181.6,495.8 L180.5,497.5 L182.6,499.0 L184.4,500.5 L183.9,502.1 L183.2,503.8 L182.4,505.5 L181.5,507.3 L183.9,508.5 L185.9,509.7 L185.6,511.3 L185.1,513.1 L184.6,514.9 L184.1,516.9 L186.8,517.6 L188.9,518.4 L189.0,520.1 L188.9,521.9 L188.9,523.8 L188.8,525.8 L191.7,525.8 L193.8,526.1 L194.3,527.7 L194.7,529.5 L195.1,531.4 L195.4,533.4 L198.2,532.7 L200.4,532.7 L201.1,534.2 L201.8,535.9 L202.4,537.7 L203.1,539.6 L205.8,538.6 L207.9,538.2 L208.8,539.7 L209.7,541.3 L210.6,543.0 L211.5,544.8 L214.0,543.3 L216.0,542.7 L217.2,543.9 L218.4,545.2 L219.8,546.7 L221.4,548.0 L223.2,545.5 L224.7,544.2 L226.3,544.8 L228.0,545.4 L229.8,546.1 L231.6,546.9 L232.6,543.9 L233.8,542.3 L235.5,542.7 L237.3,543.2 L239.1,543.9 L240.9,544.7 L241.8,541.7 L243.1,540.1 L244.8,540.4 L246.5,540.9 L248.4,541.4 L250.4,541.9 L250.8,538.7 L251.8,537.0 L253.5,537.0 L255.3,537.0 L257.2,537.0 L259.3,537.1 L258.9,533.8 L259.6,532.0 L261.3,531.6 L263.1,531.4 L265.0,531.1 L267.0,530.8 L266.1,527.6 L266.5,525.8 L268.1,525.1 L269.8,524.5 L271.5,523.8 L273.2,523.0 L272.1,520.3 L272.3,518.6 L273.7,517.5 L275.0,516.5 L276.4,515.4 L277.7,514.2 L276.7,512.0 L277.0,510.4 L278.0,509.1 L278.9,507.8 L279.9,506.4 L280.7,505.0 L280.2,503.2 L280.4,501.6 L281.0,500.1 L281.5,498.6 L281.9,497.0 L282.1,495.4 L282.0,493.8 L282.1,492.3 L282.2,490.7 L282.2,489.1 L282.3,487.5 L282.3,485.9 L282.3,484.3 L282.3,482.7 L282.3,481.1 L282.2,479.6 L282.1,478.0 L282.0,476.4 L281.8,474.8 L281.7,473.2 L281.5,471.6 L281.3,470.1 L281.1,468.5 L280.9,466.9 L280.6,465.4 L280.4,463.8 L280.1,462.2 L279.8,460.7 L279.6,459.1 L279.3,457.5 L279.0,456.0 L278.7,454.4 L278.3,452.9 L277.9,451.3 L277.4,449.8 L276.8,448.4 L276.1,447.0 L275.1,445.7 L273.9,444.7 L272.6,443.8 L271.2,443.0 L269.8,442.3Z" fill="url(#gH)" stroke="#ff1800" stroke-width="1.2"/>
<path d="M268.4,441.5 L213.2,532.3 M263.0,450.3 L207.1,455.2 M256.2,461.6 L198.2,465.3 M249.3,473.0 L192.2,477.2 M243.0,483.2 L189.0,489.4 M237.1,493.0 L188.7,502.5 M230.6,503.6 L228.1,541.0 M234.8,496.8 L238.4,537.9 M239.3,489.3 L249.1,534.2 M245.1,479.8 L259.3,527.3 M251.9,468.6 L268.6,517.6 M259.2,456.6 L275.6,505.5" stroke="#80ff30" stroke-opacity="0.5" stroke-width="1.3" fill="none"/>
<path d="M278.4,437.5 L277.9,437.2 L278.0,438.1 L278.8,436.7 L279.5,435.3 L280.2,433.9 L280.8,432.4 L281.5,431.0 L282.2,429.6 L282.9,428.2 L283.7,426.8 L284.4,425.4 L285.3,424.0 L286.1,422.7 L287.0,421.3 L287.9,420.1 L288.9,418.8 L290.0,417.6 L291.0,416.4 L292.1,415.3 L293.2,414.1 L294.3,413.0 L295.4,411.9 L296.6,410.8 L297.8,409.7 L299.0,408.7 L300.2,407.7 L301.5,406.7 L302.7,405.8 L304.1,404.9 L305.4,404.1 L306.9,403.4 L308.3,402.8 L309.8,402.2 L311.3,401.8 L312.9,401.4 L314.4,401.1 L316.0,400.9 L317.6,401.0 L319.2,401.2 L320.7,401.6 L322.3,401.5 L324.0,401.3 L325.5,401.8 L327.0,402.5 L328.3,403.4 L329.6,404.4 L331.3,404.5 L333.1,404.4 L334.4,405.3 L335.6,406.4 L336.7,407.7 L337.8,409.0 L339.6,409.1 L341.5,409.0 L342.6,410.2 L343.6,411.5 L344.5,413.0 L345.2,414.6 L347.2,414.7 L349.4,414.6 L350.2,416.0 L350.9,417.6 L351.5,419.3 L351.9,421.1 L354.1,421.2 L356.4,421.2 L357.0,422.8 L357.4,424.6 L357.6,426.4 L357.6,428.4 L360.0,428.5 L362.4,428.8 L362.8,430.5 L362.8,432.4 L362.7,434.3 L362.5,436.2 L364.9,436.6 L367.2,437.3 L367.3,439.0 L367.1,440.8 L366.8,442.7 L366.3,444.6 L368.8,445.3 L370.9,446.2 L370.8,448.0 L370.4,449.8 L369.9,451.6 L369.3,453.4 L371.8,454.3 L373.9,455.4 L373.6,457.1 L373.2,458.9 L372.5,460.6 L371.8,462.5 L374.3,463.5 L376.2,464.7 L375.8,466.4 L375.1,468.2 L374.3,469.9 L373.3,471.5 L375.7,472.9 L377.3,474.4 L376.6,476.0 L375.7,477.6 L374.5,479.1 L373.3,480.5 L375.4,482.3 L376.7,484.2 L375.7,485.6 L374.5,487.0 L373.1,488.3 L371.5,489.4 L373.3,491.6 L374.1,493.6 L372.8,494.8 L371.2,495.8 L369.5,496.7 L367.8,497.2 L368.8,499.9 L368.8,502.0 L367.2,502.7 L365.4,503.2 L363.5,503.4 L361.6,503.5 L361.9,506.4 L361.4,508.5 L359.7,508.8 L357.9,508.9 L356.0,508.8 L354.1,508.5 L353.9,511.5 L353.0,513.4 L351.2,513.3 L349.4,513.1 L347.5,512.6 L345.7,512.0 L345.0,515.0 L343.9,516.7 L342.2,516.5 L340.4,516.1 L338.5,515.5 L336.7,514.8 L336.0,517.9 L334.8,519.5 L333.1,519.3 L331.3,518.9 L329.5,518.3 L327.7,517.6 L326.8,520.7 L325.5,522.1 L323.7,521.6 L322.1,520.9 L320.6,519.8 L319.2,518.6 L317.3,521.2 L315.4,521.8 L314.1,520.6 L313.0,519.1 L312.0,517.5 L311.2,515.7 L308.5,517.5 L306.6,517.5 L305.7,516.0 L304.9,514.3 L304.2,512.6 L303.6,510.9 L300.7,511.9 L299.0,511.5 L298.2,510.0 L297.5,508.4 L296.8,506.8 L296.2,505.2 L293.7,505.5 L292.3,504.6 L291.5,503.1 L290.9,501.6 L290.3,500.1 L289.7,498.6 L287.8,497.9 L286.7,496.7 L286.2,495.2 L285.6,493.7 L285.1,492.2 L284.6,490.7 L283.7,489.4 L283.2,487.9 L282.8,486.3 L282.4,484.8 L282.0,483.2 L281.6,481.7 L281.3,480.2 L281.0,478.6 L280.6,477.0 L280.3,475.5 L280.0,473.9 L279.8,472.4 L279.6,470.8 L279.4,469.2 L279.2,467.6 L279.0,466.1 L278.9,464.5 L278.8,462.9 L278.7,461.3 L278.6,459.7 L278.5,458.1 L278.5,456.5 L278.4,455.0 L278.3,453.4 L278.3,451.8 L278.3,450.2 L278.3,448.6 L278.3,447.0 L278.3,445.4 L278.3,443.8 L278.3,442.3 L278.4,440.7 L278.4,439.1Z" fill="url(#gI)" stroke="#ff1800" stroke-width="1.2"/>
<path d="M278.4,437.5 L363.3,492.6 M285.8,442.3 L329.3,409.3 M287.9,443.7 L342.3,418.0 M301.7,452.6 L354.1,430.1 M313.9,460.5 L362.4,443.9 M326.4,468.7 L369.0,461.2 M336.5,475.2 L371.9,478.9 M331.6,472.0 L344.4,510.4 M323.0,466.4 L329.8,514.2 M313.1,460.0 L315.6,514.5 M300.0,451.5 L302.0,506.7 M286.9,443.0 L290.4,495.9" stroke="#a0ff30" stroke-opacity="0.5" stroke-width="1.3" fill="none"/>
<path d="M471.6,300.6 L470.5,300.4 L471.2,300.8 L472.5,299.9 L473.8,298.9 L475.0,297.9 L476.3,296.9 L477.6,296.0 L478.8,295.0 L480.1,294.0 L481.4,293.1 L482.7,292.1 L483.9,291.2 L485.3,290.3 L486.6,289.4 L488.0,288.6 L489.5,288.0 L490.8,287.1 L492.1,286.0 L493.8,285.8 L495.4,286.2 L496.9,287.0 L498.0,288.1 L499.8,287.6 L502.0,287.3 L502.9,288.9 L503.4,290.6 L503.6,292.3 L503.6,294.1 L505.9,294.6 L507.8,295.5 L508.0,297.2 L508.0,298.9 L507.8,300.7 L507.5,302.5 L509.8,303.4 L511.3,304.6 L511.2,306.3 L510.8,308.0 L510.3,309.7 L509.7,311.4 L511.9,312.7 L513.1,314.3 L512.4,315.9 L511.4,317.4 L510.1,318.3 L508.6,318.7 L508.9,321.3 L507.8,322.8 L506.1,322.8 L504.3,322.5 L502.7,322.0 L501.0,321.3 L499.7,323.8 L498.1,324.6 L496.5,323.9 L494.9,323.0 L493.5,322.1 L492.1,321.2 L490.1,322.7 L488.5,322.6 L487.1,321.7 L485.7,320.8 L484.5,319.8 L483.1,319.0 L481.6,318.3 L480.5,317.3 L479.3,316.1 L478.2,315.0 L477.2,313.7 L476.3,312.4 L475.5,311.1 L474.8,309.6 L474.2,308.2 L473.6,306.7 L473.1,305.2 L472.6,303.6 L472.1,302.1Z" fill="url(#gsl)" stroke="#ff1800" stroke-width="1.2"/>
<path d="M451.2,257.2 L451.0,257.3 L452.2,256.1 L453.2,254.9 L454.4,253.8 L455.7,252.8 L457.2,252.4 L458.8,252.6 L460.3,253.2 L461.8,253.9 L463.1,254.8 L464.6,255.6 L466.1,256.3 L467.3,257.4 L468.3,258.7 L469.0,260.2 L469.7,261.7 L471.5,262.3 L472.7,263.6 L472.9,265.3 L472.7,266.9 L472.0,268.4 L471.1,269.7 L471.7,271.6 L471.0,273.2 L469.5,274.1 L467.8,274.3 L466.3,274.0 L464.8,273.6 L463.0,274.5 L461.4,274.1 L460.0,273.2 L458.7,272.1 L457.6,271.0 L456.2,270.1 L454.9,269.2 L453.9,267.9 L452.9,266.6 L452.2,265.2 L451.7,263.6 L451.4,262.1 L451.3,260.4 L451.3,258.8Z" fill="url(#gbud)" stroke="#ff1800" stroke-width="1.2"/>
<path d="M408.5,324.0 L409.2,324.8 L408.5,324.1 L408.3,322.5 L408.2,320.9 L408.0,319.3 L407.9,317.7 L407.7,316.1 L407.5,314.6 L407.3,313.0 L407.0,311.4 L406.7,309.8 L406.3,308.3 L405.8,306.8 L405.2,305.3 L404.4,303.9 L403.5,302.6 L402.5,301.4 L401.4,300.2 L400.3,299.1 L399.2,297.9 L398.3,296.6 L397.4,295.2 L395.8,294.5 L394.1,294.2 L393.0,293.1 L391.9,291.8 L390.9,290.4 L389.9,288.9 L387.9,289.2 L385.9,289.5 L384.7,288.3 L383.6,287.0 L382.5,285.7 L381.1,284.3 L379.1,285.2 L377.7,286.4 L376.3,286.4 L374.6,286.7 L372.9,287.4 L371.3,288.3 L371.7,290.5 L372.0,292.5 L371.0,293.7 L369.8,295.0 L368.7,296.4 L367.7,298.0 L369.1,299.7 L370.1,301.4 L369.6,302.9 L368.9,304.5 L368.1,306.0 L367.2,307.5 L368.7,309.3 L369.5,311.0 L368.6,312.5 L367.5,313.8 L366.2,314.9 L364.7,315.5 L365.0,317.8 L364.5,319.6 L362.9,320.3 L361.3,320.8 L359.6,321.1 L357.8,321.5 L357.7,323.9 L357.1,325.6 L355.9,326.4 L356.0,327.8 L357.5,328.9 L359.1,329.9 L360.9,328.1 L362.5,327.4 L364.1,328.2 L365.5,329.2 L366.7,330.4 L367.9,331.7 L370.1,330.4 L371.8,330.4 L373.1,331.4 L374.5,332.3 L375.9,333.3 L377.3,334.1 L379.1,333.5 L380.7,333.7 L382.2,334.3 L383.7,334.8 L385.2,335.3 L386.8,335.6 L388.4,335.8 L390.0,336.0 L391.6,336.2 L393.1,336.1 L394.7,335.7 L395.8,334.7 L396.5,333.3 L397.1,331.8 L397.7,330.3 L398.6,329.0 L399.9,328.0 L401.2,327.3 L402.7,326.5 L404.1,325.9 L405.6,325.3 L407.0,324.6Z" fill="url(#gcrown)" stroke="#ff1800" stroke-width="1.2"/>
<path d="M408.5,328.8 L408.1,329.6 L408.5,329.0 L408.2,327.4 L407.9,325.9 L407.5,324.3 L407.1,322.8 L406.8,321.2 L406.4,319.7 L406.1,318.1 L405.9,316.6 L405.6,315.0 L405.5,313.4 L405.5,311.8 L405.7,310.2 L406.6,308.9 L408.0,308.2 L409.6,308.1 L411.2,308.2 L412.7,308.5 L414.3,308.7 L415.9,309.0 L417.5,309.3 L419.0,309.5 L420.6,309.6 L422.2,309.7 L423.8,309.8 L425.4,309.9 L427.0,310.1 L428.6,310.2 L430.2,310.4 L431.7,310.5 L433.3,310.7 L434.9,310.8 L436.5,311.0 L438.1,311.1 L439.7,311.1 L441.3,311.3 L442.8,311.6 L444.4,312.0 L446.0,312.5 L447.6,312.1 L449.2,311.8 L450.8,312.1 L452.4,312.5 L453.9,313.0 L455.5,313.7 L457.1,312.7 L458.8,312.0 L460.3,312.5 L461.9,313.2 L463.4,314.0 L464.8,314.9 L466.6,313.7 L468.4,313.4 L469.8,314.5 L470.8,315.9 L471.4,317.4 L471.6,319.0 L473.7,319.5 L475.1,320.7 L475.3,322.3 L475.6,324.0 L476.1,325.7 L476.7,327.4 L479.0,327.4 L480.6,328.2 L481.1,330.0 L480.3,331.5 L478.9,332.0 L477.3,332.3 L476.8,334.5 L475.5,335.7 L473.8,335.7 L472.1,335.5 L470.5,335.1 L469.0,334.5 L467.4,336.1 L465.7,336.4 L464.2,335.6 L462.8,334.8 L461.3,333.9 L459.7,333.1 L458.0,334.6 L456.4,334.9 L454.8,334.8 L453.2,334.9 L451.6,335.5 L450.2,336.8 L450.4,338.6 L450.0,340.1 L449.3,341.6 L448.7,343.1 L448.1,344.6 L447.5,346.1 L448.2,347.9 L448.1,349.5 L447.6,351.0 L447.0,352.5 L446.4,354.0 L445.8,355.5 L446.6,357.3 L446.3,358.9 L444.9,360.1 L443.6,359.4 L443.0,358.0 L442.3,356.6 L440.8,355.6 L440.1,354.1 L439.7,352.6 L439.2,351.1 L438.7,349.5 L438.0,348.1 L437.2,346.7 L436.6,345.2 L436.0,343.8 L435.3,342.4 L434.5,341.0 L433.6,339.6 L432.5,338.5 L431.2,337.5 L429.8,336.9 L428.2,336.5 L426.7,336.4 L425.1,336.4 L423.5,336.4 L421.9,336.5 L420.3,336.5 L418.7,336.2 L417.2,335.7 L415.9,334.9 L414.5,334.0 L413.3,333.0 L412.1,332.0 L410.9,330.9 L409.7,329.8Z" fill="url(#gcrown2)" stroke="#ff1800" stroke-width="1.2"/>
</g>
<g id="plantShapes">
<path d="M287.0,210.0 L324.0,267.0 L372.0,314.0" fill="none" style="stroke:var(--st)" stroke-width="11.5" stroke-linecap="round"/>
<path d="M401.4,235.9 L394.0,264.0 L385.0,290.0" fill="none" style="stroke:var(--st)" stroke-width="7" stroke-linecap="round"/>
<path d="M547.5,230.0 L512.0,252.0 L460.0,285.0" fill="none" style="stroke:var(--st)" stroke-width="13" stroke-linecap="round"/>
<path d="M273.0,438.0 L314.2,397.7 L374.0,328.0" fill="none" style="stroke:var(--st)" stroke-width="13.5" stroke-linecap="round"/>
<path d="M287.5,206.2 L288.6,207.3 L288.0,206.7 L286.9,205.6 L285.8,204.4 L284.8,203.2 L283.8,202.0 L282.7,200.8 L281.7,199.6 L280.6,198.4 L279.5,197.3 L278.4,196.1 L277.2,195.1 L276.0,194.0 L274.8,193.0 L273.5,192.1 L272.1,191.3 L270.7,190.7 L269.1,190.2 L267.6,189.8 L266.0,189.5 L264.5,189.3 L262.9,189.2 L261.3,189.2 L259.7,189.2 L258.1,189.2 L256.5,189.2 L254.9,189.3 L253.3,189.3 L251.8,189.4 L250.2,189.4 L248.6,189.5 L247.0,189.5 L245.4,189.4 L243.8,189.4 L242.2,189.3 L240.6,189.2 L239.1,189.2 L237.5,189.1 L235.9,189.1 L234.3,189.0 L232.7,189.0 L231.1,188.9 L229.5,188.8 L227.9,188.8 L226.4,188.7 L224.8,188.6 L223.2,188.5 L221.6,188.4 L220.0,188.2 L218.4,188.1 L216.9,187.9 L215.3,187.6 L213.7,187.5 L212.1,187.5 L210.5,187.2 L209.0,186.8 L207.4,186.4 L205.9,185.8 L204.3,186.0 L202.6,186.1 L201.1,185.6 L199.6,184.9 L198.2,184.1 L196.9,183.1 L195.1,183.5 L193.3,183.7 L192.0,182.8 L190.7,181.6 L189.6,180.3 L188.7,178.9 L186.6,179.3 L184.7,179.3 L183.7,177.9 L182.8,176.4 L182.2,174.8 L181.8,173.1 L179.4,173.2 L177.3,172.8 L176.8,171.1 L176.6,169.4 L176.5,167.5 L176.7,165.6 L173.9,165.4 L171.8,164.7 L171.7,162.9 L172.0,161.1 L172.4,159.3 L173.0,157.4 L170.1,156.7 L168.3,155.6 L168.5,153.9 L168.8,152.1 L169.0,150.2 L169.2,148.1 L166.2,148.1 L164.2,147.4 L164.1,145.6 L164.3,143.7 L165.0,142.0 L165.9,140.4 L163.1,139.2 L161.8,137.6 L162.5,136.0 L163.4,134.4 L164.4,132.8 L165.6,131.3 L162.9,129.6 L161.8,128.0 L162.6,126.4 L163.6,124.9 L164.7,123.4 L166.0,121.9 L163.3,120.1 L162.4,118.4 L163.3,116.9 L164.4,115.4 L165.7,114.0 L167.1,112.7 L164.6,110.6 L164.0,108.8 L165.1,107.4 L166.4,106.2 L167.9,105.0 L169.5,103.9 L167.3,101.4 L167.1,99.6 L168.4,98.4 L170.0,97.5 L171.7,96.7 L173.5,96.1 L172.0,93.0 L172.5,91.2 L174.2,90.7 L176.1,90.5 L177.9,90.7 L179.7,91.1 L179.9,87.7 L181.1,86.3 L182.9,86.5 L184.7,86.9 L186.6,87.3 L188.6,87.7 L188.7,84.1 L189.8,82.7 L191.6,82.7 L193.4,83.0 L195.1,83.7 L196.6,84.5 L197.9,81.2 L199.5,80.5 L201.1,81.3 L202.7,82.4 L204.1,83.6 L205.6,84.7 L207.5,81.7 L209.2,81.3 L210.6,82.3 L212.1,83.4 L213.6,84.6 L215.2,85.6 L217.0,82.6 L218.6,82.1 L220.1,82.9 L221.7,83.9 L223.2,85.1 L224.7,85.9 L226.5,82.9 L228.2,82.6 L229.7,83.6 L231.0,84.8 L232.3,86.3 L233.5,87.3 L236.0,85.0 L237.6,85.2 L238.8,86.6 L239.8,88.2 L240.8,89.9 L242.0,91.0 L244.7,89.0 L246.3,89.3 L247.4,90.6 L248.6,92.0 L249.8,93.5 L251.3,94.3 L253.6,91.9 L255.1,92.0 L256.6,93.0 L258.1,94.0 L259.8,95.0 L261.5,95.2 L262.7,92.3 L264.4,91.9 L266.0,92.7 L267.4,93.8 L268.3,95.2 L269.4,96.1 L272.1,95.0 L273.4,96.1 L274.1,97.6 L274.7,99.3 L275.2,101.0 L276.3,102.2 L278.8,102.0 L280.0,103.1 L280.6,104.7 L280.9,106.3 L281.0,107.9 L281.5,109.3 L283.3,110.6 L283.5,112.1 L283.3,113.8 L283.1,115.4 L282.8,117.0 L283.0,118.6 L283.9,120.1 L283.9,121.7 L283.7,123.3 L283.5,124.9 L283.4,126.5 L283.5,128.1 L283.8,129.7 L283.8,131.3 L283.7,132.8 L283.7,134.4 L283.7,136.0 L283.6,137.6 L283.6,139.2 L283.6,140.8 L283.5,142.4 L283.4,144.0 L283.4,145.5 L283.3,147.1 L283.2,148.7 L283.1,150.3 L283.0,151.9 L282.9,153.5 L282.7,155.1 L282.5,156.6 L282.4,158.2 L282.2,159.8 L282.0,161.4 L281.8,162.9 L281.6,164.5 L281.4,166.1 L281.1,167.7 L280.9,169.2 L280.7,170.8 L280.5,172.4 L280.3,174.0 L280.1,175.5 L279.9,177.1 L279.7,178.7 L279.5,180.3 L279.2,181.8 L278.9,183.4 L278.7,185.0 L278.4,186.5 L278.3,188.1 L278.4,189.7 L278.6,191.3 L279.1,192.8 L279.7,194.3 L280.4,195.7 L281.2,197.1 L282.0,198.4 L282.9,199.8 L283.7,201.1 L284.6,202.5 L285.5,203.7 L286.5,205.0Z" style="fill:var(--lA)"/>
<path d="M292.0,200.3 L291.9,201.3 L292.0,200.3 L291.5,198.8 L290.9,197.3 L290.3,195.8 L289.8,194.4 L289.2,192.9 L288.7,191.4 L288.1,189.9 L287.6,188.4 L287.2,186.9 L286.7,185.3 L286.4,183.8 L286.0,182.3 L285.7,180.7 L285.4,179.1 L285.2,177.6 L285.0,176.0 L284.8,174.4 L284.6,172.9 L284.4,171.3 L284.3,169.7 L284.1,168.1 L284.0,166.5 L283.9,165.0 L283.8,163.4 L283.7,161.8 L283.7,160.2 L283.6,158.6 L283.6,157.0 L283.6,155.5 L283.6,153.9 L283.6,152.3 L283.7,150.7 L283.7,149.1 L283.6,147.5 L283.7,145.9 L283.9,144.4 L284.3,142.8 L284.8,141.3 L284.5,139.7 L283.8,138.0 L284.1,136.4 L284.7,134.9 L285.5,133.4 L286.3,131.9 L285.8,130.2 L284.4,128.5 L285.0,126.9 L285.9,125.5 L287.1,124.3 L288.6,123.6 L288.6,121.8 L288.4,119.1 L290.2,118.7 L292.0,118.8 L293.8,119.2 L295.6,119.9 L296.7,118.2 L297.8,115.7 L299.5,116.0 L301.2,116.6 L303.0,117.3 L304.7,118.1 L306.0,116.5 L307.3,114.1 L309.0,114.6 L310.6,115.3 L312.3,116.3 L313.9,117.4 L315.4,115.9 L316.9,113.6 L318.5,114.2 L320.1,115.0 L321.8,115.9 L323.5,116.9 L325.0,115.3 L326.3,113.0 L327.9,113.4 L329.6,114.1 L331.3,115.0 L333.0,116.0 L334.4,114.4 L335.9,112.1 L337.5,112.7 L339.1,113.6 L340.6,114.7 L342.1,116.0 L343.8,114.6 L345.6,112.7 L347.1,113.6 L348.5,114.7 L349.9,116.0 L351.2,117.4 L353.0,116.3 L355.1,114.6 L356.5,115.7 L357.7,117.1 L358.8,118.6 L359.8,120.2 L361.8,119.4 L364.2,118.2 L365.3,119.5 L366.3,121.1 L367.1,122.8 L367.7,124.6 L369.9,124.2 L372.5,123.6 L373.3,125.1 L373.7,126.9 L374.0,128.7 L374.0,130.6 L376.1,131.0 L378.7,131.3 L378.9,133.1 L378.8,134.9 L378.4,136.7 L377.7,138.5 L379.7,139.5 L382.0,140.7 L381.5,142.4 L380.7,144.1 L379.8,145.7 L378.6,147.3 L380.3,148.8 L382.4,150.3 L381.9,151.9 L381.1,153.6 L380.3,155.3 L379.3,157.0 L381.2,158.4 L383.4,159.7 L382.9,161.4 L382.1,163.0 L381.2,164.7 L380.1,166.3 L381.9,167.8 L384.0,169.3 L383.4,170.9 L382.6,172.5 L381.5,174.1 L380.3,175.6 L381.9,177.2 L383.6,179.1 L382.6,180.6 L381.3,181.9 L379.8,183.0 L378.2,183.9 L379.1,186.1 L380.2,188.4 L378.9,189.5 L377.4,190.5 L375.8,191.5 L374.1,192.5 L375.1,194.7 L376.2,196.9 L374.9,198.1 L373.4,199.1 L371.7,200.0 L370.1,200.7 L370.6,202.9 L370.8,205.2 L369.1,205.9 L367.4,206.3 L365.7,206.6 L364.0,206.7 L363.3,208.7 L362.6,210.6 L361.0,211.0 L359.4,211.4 L357.7,211.9 L356.2,212.5 L355.6,214.3 L355.0,216.0 L353.6,216.9 L352.2,217.7 L350.8,218.4 L349.4,219.1 L348.5,220.6 L347.4,221.9 L345.8,222.3 L344.3,222.7 L342.7,222.9 L341.1,223.1 L339.6,223.6 L338.1,223.9 L336.5,223.8 L334.9,223.7 L333.3,223.5 L331.8,223.2 L330.2,222.7 L328.8,222.1 L327.3,221.5 L325.9,220.7 L324.6,219.9 L323.2,219.1 L321.9,218.3 L320.5,217.4 L319.2,216.6 L317.8,215.7 L316.5,214.9 L315.1,214.1 L313.8,213.3 L312.4,212.5 L311.1,211.7 L309.7,210.8 L308.4,210.0 L307.0,209.1 L305.7,208.3 L304.3,207.5 L303.0,206.6 L301.6,205.8 L300.3,205.0 L298.9,204.2 L297.5,203.4 L296.2,202.6 L294.8,201.8 L293.4,201.1Z" style="fill:var(--lB)"/>
<path d="M282.7,214.8 L283.5,214.6 L283.5,214.8 L282.0,214.8 L280.4,214.9 L278.8,214.9 L277.2,215.0 L275.6,215.0 L274.0,215.1 L272.5,215.1 L270.9,215.2 L269.3,215.2 L267.7,215.3 L266.1,215.4 L264.5,215.4 L262.9,215.5 L261.4,215.6 L259.8,215.7 L258.2,215.8 L256.6,216.0 L255.0,216.1 L253.5,216.3 L251.9,216.4 L250.3,216.6 L248.7,216.8 L247.2,217.0 L245.6,217.2 L244.0,217.4 L242.4,217.7 L240.9,218.0 L239.3,218.3 L237.8,218.7 L236.3,219.1 L234.8,219.6 L233.3,220.1 L231.8,220.6 L230.3,221.3 L228.9,221.9 L227.4,222.6 L226.0,223.3 L224.6,224.0 L223.2,224.8 L222.0,225.9 L220.7,226.7 L219.2,227.4 L217.8,228.1 L216.2,228.7 L215.2,229.9 L214.4,231.5 L213.0,232.3 L211.5,233.0 L210.0,233.6 L208.3,234.1 L207.6,235.8 L207.4,237.8 L206.0,238.7 L204.5,239.4 L202.9,240.1 L201.2,240.9 L201.2,242.9 L201.8,245.1 L200.6,246.3 L199.2,247.3 L197.7,248.4 L196.1,249.6 L197.0,251.6 L198.6,253.7 L197.5,255.1 L196.3,256.4 L194.9,257.7 L193.5,259.1 L194.9,261.0 L196.7,262.8 L195.9,264.3 L194.8,265.8 L193.7,267.3 L192.5,268.9 L194.2,270.5 L196.2,272.1 L195.5,273.7 L194.6,275.3 L193.7,276.9 L192.6,278.6 L194.4,280.1 L196.6,281.5 L196.0,283.1 L195.3,284.8 L194.5,286.5 L193.6,288.3 L195.7,289.6 L197.9,290.8 L197.5,292.4 L197.0,294.2 L196.4,296.0 L195.7,297.8 L197.8,298.9 L200.1,299.9 L199.8,301.6 L199.4,303.4 L199.0,305.3 L198.5,307.2 L200.9,308.0 L203.3,308.5 L203.5,310.1 L203.7,311.9 L204.1,313.8 L204.8,315.8 L207.2,315.2 L209.5,314.5 L210.5,315.8 L211.6,317.3 L212.5,319.0 L213.4,320.7 L215.7,319.6 L218.0,318.8 L219.0,320.2 L219.9,321.8 L220.8,323.5 L221.6,325.3 L224.0,324.3 L226.2,323.4 L227.3,324.7 L228.4,326.1 L229.7,327.6 L231.3,329.1 L233.2,327.2 L234.6,325.3 L236.1,325.8 L237.9,326.3 L239.8,326.7 L241.8,327.2 L242.4,324.6 L243.0,322.4 L244.7,322.2 L246.6,322.3 L248.5,322.3 L250.6,322.2 L250.4,319.5 L250.4,317.2 L252.0,316.5 L253.7,316.0 L255.6,315.7 L257.5,315.6 L257.3,312.9 L257.5,310.6 L259.1,310.1 L260.9,309.8 L262.8,309.5 L264.7,309.5 L264.6,306.8 L265.2,304.6 L267.1,304.6 L268.8,305.5 L269.0,307.0 L268.7,308.7 L271.4,309.1 L273.5,309.9 L273.5,311.6 L273.4,313.4 L274.0,315.6 L277.4,316.6 L277.5,313.6 L277.3,311.5 L278.8,310.6 L280.4,309.8 L282.2,309.1 L283.9,308.5 L283.1,305.9 L283.3,303.8 L285.1,303.2 L286.9,303.3 L288.6,303.7 L290.3,304.4 L291.5,302.1 L292.9,300.7 L294.5,301.1 L296.2,301.5 L298.1,301.7 L300.1,301.6 L300.3,299.0 L300.7,297.1 L302.1,296.4 L303.7,295.6 L305.3,294.9 L306.8,294.2 L306.7,291.9 L307.3,290.2 L309.0,289.6 L310.7,289.5 L312.4,289.7 L314.1,290.0 L315.1,287.9 L316.0,286.4 L317.3,285.7 L318.6,284.7 L319.8,283.5 L321.0,282.1 L320.2,280.2 L320.1,278.5 L320.8,277.1 L321.6,275.6 L322.4,274.2 L323.1,272.7 L322.5,270.9 L322.4,269.3 L323.0,267.8 L323.5,266.3 L324.0,264.7 L324.4,263.2 L324.0,261.5 L323.8,260.0 L323.8,258.4 L323.6,256.8 L323.2,255.3 L322.7,253.8 L322.1,252.3 L321.4,250.9 L320.7,249.5 L319.9,248.1 L319.1,246.7 L318.3,245.4 L317.4,244.0 L316.5,242.7 L315.6,241.4 L314.7,240.1 L313.7,238.9 L312.7,237.6 L311.7,236.4 L310.7,235.2 L309.6,234.0 L308.6,232.8 L307.5,231.6 L306.5,230.5 L305.4,229.3 L304.4,228.1 L303.4,226.8 L302.4,225.6 L301.4,224.3 L300.5,223.1 L299.5,221.8 L298.5,220.6 L297.4,219.4 L296.3,218.3 L295.0,217.4 L293.6,216.6 L292.1,216.1 L290.6,215.7 L289.0,215.4 L287.4,215.2 L285.9,215.1 L284.3,215.0Z" style="fill:var(--lC)"/>
<path d="M401.4,235.9 L401.7,236.2 L400.4,235.2 L399.1,234.4 L397.8,233.5 L396.5,232.6 L395.2,231.6 L394.0,230.6 L392.8,229.5 L391.7,228.3 L390.8,227.1 L389.8,225.8 L388.9,224.5 L388.0,223.2 L387.2,221.8 L386.3,220.5 L385.5,219.1 L384.8,217.7 L384.1,216.2 L383.4,214.8 L382.8,213.3 L382.2,211.9 L381.7,210.4 L381.2,208.8 L380.7,207.3 L380.3,205.8 L379.9,204.3 L379.6,202.7 L379.4,201.1 L379.0,199.6 L378.4,198.0 L378.3,196.4 L378.4,194.8 L378.6,193.2 L379.1,191.7 L378.4,190.1 L377.7,188.4 L378.1,186.8 L378.8,185.3 L379.6,183.9 L380.7,182.5 L379.8,180.7 L379.2,178.8 L380.1,177.4 L381.2,176.1 L382.4,174.9 L383.8,173.8 L382.9,171.7 L382.7,169.8 L383.9,168.6 L385.3,167.6 L386.8,166.7 L388.4,166.1 L388.2,163.8 L388.9,162.1 L390.5,161.5 L392.2,161.3 L394.0,161.2 L395.7,161.2 L396.4,159.0 L397.5,157.5 L399.2,157.4 L400.9,157.5 L402.7,157.6 L404.5,157.8 L405.3,155.5 L406.6,154.3 L408.3,154.4 L410.0,154.7 L411.6,155.3 L413.0,156.2 L414.8,154.3 L416.5,153.9 L418.0,154.9 L419.3,156.0 L420.5,157.2 L421.6,158.6 L423.9,157.3 L425.6,157.5 L426.8,158.7 L427.8,160.1 L428.8,161.5 L429.5,163.1 L432.1,162.2 L433.7,162.8 L434.6,164.3 L435.3,165.8 L436.0,167.5 L436.6,169.1 L439.3,168.6 L440.7,169.5 L441.4,171.0 L442.0,172.6 L442.6,174.3 L443.2,175.9 L445.8,175.7 L447.0,177.0 L446.9,178.8 L446.0,180.2 L444.5,180.7 L443.1,181.1 L442.9,183.8 L441.8,185.0 L440.3,185.5 L438.6,186.1 L437.0,187.2 L436.1,188.7 L437.6,190.8 L437.6,192.3 L437.0,193.9 L436.5,195.5 L436.1,197.1 L436.0,198.7 L437.2,200.3 L437.2,201.9 L436.8,203.5 L436.3,205.0 L435.7,206.5 L435.3,208.0 L435.3,209.7 L434.7,211.1 L434.0,212.6 L433.3,214.0 L432.6,215.4 L431.8,216.8 L430.9,218.2 L430.0,219.5 L429.0,220.7 L428.0,221.9 L426.8,223.0 L425.5,223.9 L424.2,224.8 L422.9,225.7 L421.5,226.5 L420.1,227.3 L418.7,228.1 L417.3,228.8 L416.0,229.6 L414.6,230.4 L413.2,231.2 L411.8,232.0 L410.4,232.7 L408.9,233.4 L407.5,234.0 L406.0,234.6 L404.5,235.1 L403.0,235.5Z" style="fill:var(--lS)"/>
<path d="M542.6,219.0 L543.3,219.4 L542.6,219.0 L541.1,219.5 L539.7,220.1 L538.2,220.7 L536.7,221.2 L535.2,221.8 L533.7,222.3 L532.2,222.9 L530.7,223.4 L529.2,223.9 L527.7,224.5 L526.2,225.0 L524.7,225.6 L523.3,226.2 L521.8,226.8 L520.3,227.5 L518.9,228.1 L517.4,228.7 L515.9,229.3 L514.4,229.8 L512.9,230.3 L511.4,230.7 L509.8,231.1 L508.3,231.3 L506.7,231.5 L505.1,231.5 L503.5,231.4 L501.9,231.2 L500.4,231.0 L498.8,230.7 L497.3,230.3 L495.7,229.9 L494.2,229.4 L492.7,228.9 L491.2,228.3 L489.8,227.7 L488.3,227.1 L486.8,226.4 L485.4,225.8 L484.0,225.0 L482.6,224.2 L481.3,223.4 L480.0,222.5 L478.7,221.5 L477.6,220.4 L476.2,219.6 L474.7,218.9 L473.6,217.8 L472.5,216.6 L471.5,215.3 L470.6,213.9 L469.0,213.3 L467.4,212.6 L466.5,211.3 L465.7,209.9 L465.0,208.4 L464.4,206.8 L462.6,206.3 L460.9,205.6 L460.2,204.1 L459.8,202.5 L459.5,200.8 L459.5,199.0 L457.4,198.3 L455.8,197.3 L455.6,195.6 L455.8,193.9 L456.2,192.2 L456.8,190.5 L454.6,189.3 L453.1,187.9 L453.4,186.3 L454.0,184.6 L454.8,182.9 L455.7,181.3 L453.4,179.9 L451.9,178.3 L452.6,176.7 L453.5,175.1 L454.6,173.5 L455.8,172.0 L453.3,170.3 L452.1,168.6 L453.0,167.1 L454.1,165.6 L455.4,164.3 L456.9,163.1 L454.7,160.9 L454.0,159.0 L455.2,157.7 L456.6,156.5 L458.1,155.3 L459.6,154.0 L457.3,151.8 L456.5,150.0 L457.5,148.6 L458.6,147.1 L459.7,145.5 L460.9,143.9 L458.1,142.3 L457.1,140.7 L457.8,139.1 L458.8,137.5 L459.9,136.0 L461.1,134.5 L458.3,132.7 L457.6,131.0 L458.6,129.5 L459.9,128.2 L461.3,126.9 L462.8,125.7 L460.4,123.4 L460.0,121.6 L461.2,120.3 L462.7,119.1 L464.3,118.1 L465.9,117.1 L463.8,114.4 L463.8,112.6 L465.3,111.6 L467.0,110.8 L468.7,110.4 L470.6,110.1 L469.6,106.7 L470.6,105.2 L472.4,105.0 L474.2,105.1 L476.1,105.5 L477.8,106.0 L478.4,102.6 L479.8,101.6 L481.6,102.1 L483.3,102.8 L484.9,103.8 L486.3,104.7 L488.0,101.7 L489.7,101.2 L491.2,102.2 L492.6,103.4 L493.9,104.8 L495.3,105.9 L497.5,103.2 L499.2,103.1 L500.5,104.3 L501.8,105.6 L503.1,107.0 L504.4,108.1 L506.8,105.6 L508.5,105.6 L509.7,106.9 L510.9,108.3 L512.1,109.9 L513.3,110.9 L515.9,108.7 L517.5,108.9 L518.7,110.3 L519.7,111.8 L520.7,113.5 L521.9,114.6 L524.7,112.6 L526.2,113.1 L527.2,114.6 L528.1,116.3 L528.9,118.0 L530.0,119.1 L533.0,117.5 L534.4,118.2 L535.3,119.7 L536.1,121.4 L536.8,123.1 L538.0,124.2 L540.8,122.9 L542.2,123.7 L543.1,125.3 L543.9,126.8 L544.6,128.5 L545.9,129.5 L548.5,128.7 L549.8,129.6 L550.6,131.1 L551.4,132.7 L552.0,134.3 L553.1,135.3 L555.6,135.2 L556.6,136.5 L557.2,138.0 L557.7,139.6 L558.2,141.2 L559.1,142.5 L561.0,143.2 L561.7,144.6 L562.1,146.2 L562.4,147.8 L562.7,149.4 L563.3,150.8 L564.5,152.2 L564.8,153.7 L564.8,155.3 L564.8,156.9 L564.8,158.5 L564.9,160.1 L565.0,161.7 L564.8,163.3 L564.6,164.9 L564.4,166.4 L564.1,168.0 L563.8,169.6 L563.4,171.1 L563.0,172.6 L562.6,174.2 L562.2,175.7 L561.7,177.2 L561.2,178.7 L560.7,180.2 L560.1,181.7 L559.4,183.2 L558.8,184.6 L558.1,186.0 L557.3,187.4 L556.5,188.8 L555.8,190.2 L555.0,191.6 L554.2,193.0 L553.5,194.4 L552.7,195.8 L551.9,197.2 L551.1,198.5 L550.3,199.9 L549.5,201.3 L548.7,202.7 L548.0,204.1 L547.3,205.5 L546.6,206.9 L546.0,208.4 L545.5,209.9 L545.0,211.4 L544.5,212.9 L544.0,214.4 L543.5,216.0 L543.1,217.5Z" style="fill:var(--lD)"/>
<path d="M547.3,226.2 L546.1,227.0 L547.3,226.2 L548.4,225.1 L549.5,224.0 L550.7,222.9 L551.8,221.8 L553.0,220.7 L554.1,219.6 L555.2,218.5 L556.2,217.3 L557.3,216.1 L558.3,214.9 L559.2,213.6 L560.0,212.2 L560.8,210.8 L561.5,209.4 L562.1,208.0 L562.7,206.5 L563.3,205.0 L563.8,203.5 L564.4,202.0 L564.9,200.5 L565.4,199.0 L565.9,197.5 L566.5,196.1 L567.1,194.6 L567.6,193.1 L568.2,191.6 L568.8,190.1 L569.3,188.6 L569.8,187.1 L570.3,185.7 L570.8,184.2 L571.4,182.7 L571.9,181.2 L572.5,179.7 L573.1,178.2 L573.7,176.8 L574.3,175.3 L575.0,173.9 L575.8,172.5 L576.6,171.1 L577.5,169.8 L578.4,168.5 L579.3,167.2 L580.3,166.0 L581.3,164.8 L582.3,163.5 L583.4,162.4 L584.6,161.3 L585.8,160.3 L587.2,159.5 L588.3,158.4 L589.3,157.1 L590.8,156.4 L592.3,155.8 L593.8,155.4 L595.4,155.2 L596.8,154.3 L598.1,153.1 L599.7,152.9 L601.3,153.0 L602.9,153.2 L604.6,153.6 L606.1,152.7 L607.5,151.4 L609.1,151.6 L610.8,152.0 L612.3,152.6 L613.9,153.3 L615.5,152.5 L617.1,151.1 L618.7,151.5 L620.3,152.2 L621.8,153.1 L623.3,154.1 L624.9,153.2 L626.7,151.6 L628.2,152.2 L629.7,153.1 L631.2,154.2 L632.6,155.4 L634.3,154.4 L636.2,152.6 L637.7,153.4 L639.1,154.6 L640.5,155.9 L641.8,157.3 L643.6,156.2 L645.7,154.4 L647.1,155.4 L648.4,156.7 L649.6,158.1 L650.8,159.7 L652.7,158.7 L654.9,157.1 L656.2,158.2 L657.4,159.5 L658.6,161.0 L659.7,162.6 L661.7,161.8 L663.9,160.3 L665.2,161.5 L666.3,163.0 L667.3,164.6 L668.2,166.3 L670.3,165.6 L672.7,164.4 L673.8,165.8 L674.7,167.4 L675.5,169.1 L676.1,170.9 L678.3,170.5 L680.8,169.8 L681.7,171.3 L682.3,173.0 L682.9,174.8 L683.3,176.7 L685.5,176.6 L688.1,176.1 L688.8,177.7 L689.3,179.5 L689.7,181.3 L690.0,183.2 L692.2,183.2 L694.8,183.0 L695.4,184.7 L695.7,186.5 L695.9,188.3 L695.9,190.2 L698.1,190.6 L700.7,190.9 L700.9,192.6 L700.8,194.4 L700.3,196.2 L699.4,197.8 L701.3,199.0 L703.3,200.7 L702.5,202.3 L701.3,203.7 L699.9,205.0 L698.3,206.0 L699.4,208.0 L700.5,210.3 L699.1,211.5 L697.5,212.3 L695.8,213.1 L694.0,213.6 L694.3,215.8 L694.8,218.4 L693.3,219.1 L691.5,219.7 L689.7,220.0 L687.8,220.2 L687.8,222.6 L687.8,225.1 L686.2,225.6 L684.4,225.9 L682.5,226.1 L680.6,226.2 L680.4,228.5 L680.3,231.0 L678.6,231.5 L676.8,231.7 L674.9,231.8 L673.0,231.8 L672.8,234.1 L672.6,236.7 L670.9,237.0 L669.1,237.1 L667.2,237.1 L665.2,237.0 L664.9,239.4 L664.5,241.9 L662.8,242.1 L661.0,242.1 L659.1,242.1 L657.3,242.0 L656.7,244.3 L656.1,246.4 L654.4,246.7 L652.7,246.8 L651.0,246.8 L649.2,246.6 L648.3,248.4 L647.1,250.1 L645.4,250.0 L643.7,249.7 L642.1,249.2 L640.6,248.6 L639.0,249.5 L637.3,250.1 L635.8,249.5 L634.3,248.8 L632.9,248.0 L631.5,247.3 L629.8,247.5 L628.1,247.6 L626.6,247.0 L625.1,246.4 L623.7,245.7 L622.2,245.2 L620.6,245.0 L619.1,244.6 L617.6,244.0 L616.1,243.5 L614.6,242.9 L613.1,242.4 L611.6,241.8 L610.2,241.2 L608.7,240.6 L607.2,240.0 L605.8,239.4 L604.3,238.8 L602.9,238.1 L601.5,237.4 L600.1,236.7 L598.6,235.9 L597.2,235.2 L595.9,234.4 L594.5,233.7 L593.1,232.9 L591.7,232.2 L590.3,231.5 L588.9,230.7 L587.4,230.0 L586.0,229.3 L584.6,228.7 L583.1,228.0 L581.7,227.4 L580.2,226.7 L578.8,226.1 L577.3,225.4 L575.9,224.8 L574.4,224.2 L572.9,223.6 L571.4,223.1 L569.9,222.6 L568.4,222.2 L566.8,221.9 L565.3,221.8 L563.7,222.0 L562.2,222.5 L560.8,223.2 L559.5,224.2 L558.3,225.2 L557.2,226.3 L556.0,227.3 L554.6,228.2 L553.1,228.5 L551.5,228.3 L550.1,227.8 L548.7,227.0Z" style="fill:var(--lE)"/>
<path d="M547.9,232.1 L548.4,231.7 L547.1,232.6 L545.8,233.5 L544.4,234.3 L543.1,235.2 L541.8,236.0 L540.4,236.9 L539.0,237.7 L537.7,238.5 L536.3,239.3 L534.9,240.0 L533.5,240.7 L532.1,241.4 L530.6,242.1 L529.2,242.8 L527.8,243.5 L526.4,244.2 L525.0,244.9 L523.6,245.7 L522.2,246.4 L520.8,247.3 L519.5,248.1 L518.2,249.1 L517.0,250.0 L515.7,251.0 L514.5,252.1 L513.4,253.1 L512.2,254.2 L511.1,255.3 L510.0,256.5 L508.9,257.6 L507.9,258.8 L506.8,260.0 L505.8,261.3 L504.9,262.5 L503.9,263.8 L503.0,265.1 L502.1,266.4 L501.2,267.7 L500.3,269.0 L499.6,270.4 L499.1,271.9 L498.6,273.4 L498.1,274.9 L497.7,276.5 L497.4,278.1 L497.7,279.7 L498.4,281.2 L498.5,282.8 L498.5,284.4 L498.6,286.0 L498.6,287.6 L499.5,289.0 L500.9,290.2 L501.2,291.8 L501.5,293.4 L501.8,295.0 L502.0,296.7 L503.4,297.8 L505.3,298.4 L505.9,299.9 L506.5,301.4 L507.1,303.0 L507.5,304.7 L509.1,305.4 L511.2,305.7 L512.0,307.2 L512.6,308.7 L513.1,310.4 L513.4,312.1 L515.1,312.8 L517.3,313.1 L517.9,314.7 L518.3,316.3 L518.6,318.1 L518.8,319.9 L520.6,320.6 L523.1,320.6 L523.7,322.1 L524.2,323.7 L524.7,325.5 L525.3,327.5 L527.3,327.5 L529.9,326.7 L530.8,328.1 L531.6,329.7 L532.4,331.4 L533.1,333.2 L535.2,332.9 L537.8,331.8 L538.8,333.1 L539.7,334.7 L540.6,336.4 L541.3,338.2 L543.4,337.8 L545.9,336.6 L547.0,337.9 L547.9,339.5 L548.8,341.1 L549.7,342.9 L551.8,342.4 L554.2,341.1 L555.3,342.4 L556.3,343.9 L557.3,345.5 L558.2,347.3 L560.2,346.7 L562.7,345.5 L563.8,346.8 L564.8,348.3 L565.7,350.0 L566.5,351.7 L568.6,351.2 L571.0,350.0 L572.2,351.2 L573.2,352.7 L574.3,354.2 L575.5,355.8 L577.6,354.9 L579.5,353.0 L580.9,353.9 L582.4,354.9 L584.0,355.9 L585.8,356.9 L587.3,355.3 L588.5,352.9 L590.1,353.2 L591.9,353.8 L593.7,354.4 L595.5,355.1 L596.7,353.3 L597.6,350.7 L599.3,350.9 L601.1,351.3 L602.9,351.8 L604.8,352.4 L605.8,350.5 L606.5,347.8 L608.2,347.9 L610.0,348.0 L611.9,348.3 L613.9,348.5 L614.5,346.4 L614.7,343.7 L616.3,343.3 L618.0,343.0 L619.9,342.7 L621.9,342.3 L621.9,340.1 L621.3,337.5 L622.8,336.7 L624.4,336.0 L626.2,335.3 L628.1,334.6 L627.7,332.5 L626.8,329.9 L628.2,329.0 L629.8,328.1 L631.5,327.3 L633.3,326.4 L632.7,324.3 L631.5,321.9 L632.7,320.8 L634.1,319.7 L635.7,318.5 L637.3,317.4 L636.3,315.4 L634.8,313.2 L635.8,311.9 L637.0,310.6 L638.4,309.3 L639.8,307.9 L638.6,306.0 L636.7,304.2 L637.5,302.7 L638.5,301.2 L639.6,299.6 L640.7,298.0 L639.1,296.4 L636.8,295.0 L637.2,293.5 L637.8,291.7 L638.4,289.9 L639.1,288.1 L637.1,287.0 L634.6,286.1 L634.8,284.4 L635.1,282.6 L635.5,280.8 L635.9,278.9 L633.9,278.0 L631.5,277.2 L631.5,275.5 L631.7,273.7 L632.0,272.0 L632.3,270.2 L630.5,269.1 L628.4,268.3 L628.2,266.7 L627.9,265.0 L627.5,263.3 L626.8,261.7 L624.8,261.4 L622.8,261.5 L621.6,260.5 L620.4,259.5 L619.0,258.5 L617.6,257.6 L615.9,257.7 L614.2,257.9 L612.8,257.2 L611.3,256.5 L609.9,255.8 L608.4,255.2 L606.9,254.9 L605.3,254.5 L603.8,253.9 L602.4,253.4 L600.9,252.9 L599.3,252.4 L597.8,251.9 L596.3,251.4 L594.8,250.9 L593.3,250.4 L591.8,249.9 L590.3,249.4 L588.8,248.9 L587.3,248.4 L585.8,247.9 L584.3,247.4 L582.8,247.0 L581.3,246.5 L579.8,246.0 L578.2,245.5 L576.7,245.1 L575.2,244.6 L573.7,244.1 L572.2,243.6 L570.7,243.1 L569.2,242.5 L567.7,242.0 L566.3,241.4 L564.8,240.7 L563.4,240.1 L562.0,239.4 L560.6,238.7 L559.2,237.9 L557.8,237.2 L556.4,236.4 L555.0,235.6 L553.6,234.9 L552.2,234.2 L550.7,233.5 L549.3,232.8Z" style="fill:var(--lF)"/>
<path d="M270.4,433.6 L271.1,434.6 L271.2,433.9 L269.7,433.4 L268.2,432.9 L266.7,432.4 L265.2,432.0 L263.7,431.5 L262.2,431.0 L260.7,430.5 L259.1,430.1 L257.6,429.6 L256.1,429.2 L254.5,428.8 L253.0,428.5 L251.4,428.1 L249.9,427.8 L248.3,427.6 L246.7,427.4 L245.2,427.2 L243.6,427.0 L242.0,426.9 L240.4,426.8 L238.8,426.7 L237.2,426.6 L235.7,426.6 L234.1,426.5 L232.5,426.4 L230.9,426.4 L229.3,426.3 L227.7,426.2 L226.1,426.2 L224.6,426.1 L223.0,426.0 L221.4,425.9 L219.8,425.7 L218.2,425.5 L216.7,425.4 L215.1,425.2 L213.5,425.0 L211.9,424.7 L210.3,424.6 L208.7,424.8 L207.2,424.5 L205.6,424.1 L204.1,423.5 L202.6,422.8 L201.0,423.1 L199.2,423.6 L197.7,422.9 L196.3,422.0 L195.0,421.0 L193.8,419.7 L192.0,420.1 L190.0,420.8 L188.7,419.8 L187.5,418.5 L186.5,417.0 L185.5,415.4 L183.4,416.0 L181.2,416.9 L180.1,415.5 L179.2,413.9 L178.4,412.2 L177.7,410.4 L175.4,411.1 L173.0,411.6 L172.2,410.0 L171.5,408.3 L171.1,406.5 L170.9,404.6 L168.4,404.7 L166.0,404.7 L165.5,403.0 L165.3,401.2 L165.3,399.3 L165.5,397.4 L162.9,397.1 L160.6,396.5 L160.5,394.7 L160.7,392.9 L161.2,391.1 L162.0,389.4 L159.6,388.3 L157.7,386.9 L158.4,385.2 L159.3,383.6 L160.6,382.3 L162.0,381.2 L160.5,379.1 L159.9,376.8 L161.5,375.9 L163.2,375.4 L165.1,375.1 L167.0,374.9 L166.7,372.2 L166.9,370.0 L168.4,369.4 L170.2,368.8 L172.0,368.2 L173.8,367.6 L173.0,365.0 L173.1,362.7 L174.9,362.3 L176.7,362.3 L178.6,362.6 L180.4,363.1 L181.1,360.4 L182.1,358.5 L183.9,358.7 L185.7,359.1 L187.4,359.8 L189.2,360.5 L190.2,357.8 L191.5,356.1 L193.3,356.6 L194.9,357.3 L196.6,358.3 L197.8,359.4 L199.7,357.2 L201.6,356.3 L202.9,357.5 L204.1,358.9 L205.1,360.5 L206.2,362.2 L208.6,360.3 L210.4,359.4 L211.8,360.3 L213.4,361.2 L215.1,362.0 L217.0,362.8 L218.0,359.9 L219.2,358.3 L220.9,358.5 L222.6,358.8 L224.4,359.2 L226.3,359.7 L227.0,357.0 L228.3,355.5 L230.0,355.8 L231.7,356.3 L233.4,357.0 L234.9,357.9 L236.5,355.7 L238.1,354.9 L239.7,355.6 L241.2,356.6 L242.6,357.5 L244.0,358.6 L245.9,356.9 L247.6,356.5 L249.1,357.3 L250.5,358.2 L252.0,359.0 L253.5,359.9 L255.3,358.4 L257.0,358.1 L258.5,358.7 L260.0,359.5 L261.4,360.3 L262.8,361.2 L264.7,360.2 L266.4,360.3 L267.7,361.3 L268.9,362.4 L269.9,363.6 L270.9,364.9 L272.8,365.1 L274.1,366.1 L274.9,367.5 L275.6,369.0 L276.3,370.4 L276.9,371.9 L278.1,373.0 L278.8,374.5 L279.2,376.0 L279.7,377.5 L280.1,379.0 L280.5,380.6 L280.8,382.1 L281.1,383.7 L281.4,385.3 L281.6,386.8 L281.8,388.4 L282.0,390.0 L282.1,391.6 L282.3,393.2 L282.3,394.7 L282.3,396.3 L282.3,397.9 L282.1,399.5 L281.9,401.1 L281.7,402.6 L281.4,404.2 L281.1,405.8 L280.8,407.3 L280.5,408.9 L280.2,410.4 L279.8,412.0 L279.5,413.5 L279.1,415.1 L278.7,416.6 L278.3,418.1 L277.8,419.7 L277.3,421.2 L276.8,422.7 L276.2,424.1 L275.5,425.5 L274.7,426.9 L273.9,428.3 L273.0,429.6 L272.2,431.0 L271.3,432.3Z" style="fill:var(--lG)"/>
<path d="M268.4,441.5 L269.3,441.0 L269.0,441.4 L267.4,441.6 L265.9,441.7 L264.3,441.8 L262.7,441.9 L261.1,442.0 L259.5,442.1 L257.9,442.3 L256.4,442.4 L254.8,442.5 L253.2,442.6 L251.6,442.8 L250.0,442.9 L248.4,443.1 L246.9,443.2 L245.3,443.4 L243.7,443.6 L242.1,443.8 L240.6,443.9 L239.0,444.1 L237.4,444.3 L235.8,444.5 L234.2,444.6 L232.7,444.8 L231.1,445.0 L229.5,445.3 L227.9,445.5 L226.4,445.7 L224.8,446.0 L223.3,446.3 L221.7,446.7 L220.2,447.1 L218.6,447.5 L217.1,448.0 L215.6,448.5 L214.1,449.1 L212.6,449.6 L211.1,450.0 L209.5,450.3 L208.2,451.3 L207.0,452.5 L205.5,453.1 L204.0,453.6 L202.4,454.1 L200.7,454.5 L199.9,456.1 L199.4,458.0 L198.0,458.7 L196.5,459.5 L194.9,460.2 L193.2,460.9 L193.2,463.0 L193.5,465.1 L192.3,466.1 L190.8,467.1 L189.2,468.0 L187.4,468.9 L188.2,471.1 L189.2,473.4 L187.9,474.5 L186.5,475.6 L184.9,476.7 L183.3,477.9 L184.6,480.0 L185.9,482.0 L184.9,483.4 L183.7,484.7 L182.3,486.1 L181.0,487.6 L182.7,489.4 L184.4,491.2 L183.6,492.7 L182.6,494.2 L181.6,495.8 L180.5,497.5 L182.6,499.0 L184.4,500.5 L183.9,502.1 L183.2,503.8 L182.4,505.5 L181.5,507.3 L183.9,508.5 L185.9,509.7 L185.6,511.3 L185.1,513.1 L184.6,514.9 L184.1,516.9 L186.8,517.6 L188.9,518.4 L189.0,520.1 L188.9,521.9 L188.9,523.8 L188.8,525.8 L191.7,525.8 L193.8,526.1 L194.3,527.7 L194.7,529.5 L195.1,531.4 L195.4,533.4 L198.2,532.7 L200.4,532.7 L201.1,534.2 L201.8,535.9 L202.4,537.7 L203.1,539.6 L205.8,538.6 L207.9,538.2 L208.8,539.7 L209.7,541.3 L210.6,543.0 L211.5,544.8 L214.0,543.3 L216.0,542.7 L217.2,543.9 L218.4,545.2 L219.8,546.7 L221.4,548.0 L223.2,545.5 L224.7,544.2 L226.3,544.8 L228.0,545.4 L229.8,546.1 L231.6,546.9 L232.6,543.9 L233.8,542.3 L235.5,542.7 L237.3,543.2 L239.1,543.9 L240.9,544.7 L241.8,541.7 L243.1,540.1 L244.8,540.4 L246.5,540.9 L248.4,541.4 L250.4,541.9 L250.8,538.7 L251.8,537.0 L253.5,537.0 L255.3,537.0 L257.2,537.0 L259.3,537.1 L258.9,533.8 L259.6,532.0 L261.3,531.6 L263.1,531.4 L265.0,531.1 L267.0,530.8 L266.1,527.6 L266.5,525.8 L268.1,525.1 L269.8,524.5 L271.5,523.8 L273.2,523.0 L272.1,520.3 L272.3,518.6 L273.7,517.5 L275.0,516.5 L276.4,515.4 L277.7,514.2 L276.7,512.0 L277.0,510.4 L278.0,509.1 L278.9,507.8 L279.9,506.4 L280.7,505.0 L280.2,503.2 L280.4,501.6 L281.0,500.1 L281.5,498.6 L281.9,497.0 L282.1,495.4 L282.0,493.8 L282.1,492.3 L282.2,490.7 L282.2,489.1 L282.3,487.5 L282.3,485.9 L282.3,484.3 L282.3,482.7 L282.3,481.1 L282.2,479.6 L282.1,478.0 L282.0,476.4 L281.8,474.8 L281.7,473.2 L281.5,471.6 L281.3,470.1 L281.1,468.5 L280.9,466.9 L280.6,465.4 L280.4,463.8 L280.1,462.2 L279.8,460.7 L279.6,459.1 L279.3,457.5 L279.0,456.0 L278.7,454.4 L278.3,452.9 L277.9,451.3 L277.4,449.8 L276.8,448.4 L276.1,447.0 L275.1,445.7 L273.9,444.7 L272.6,443.8 L271.2,443.0 L269.8,442.3Z" style="fill:var(--lH)"/>
<path d="M278.4,437.5 L277.9,437.2 L278.0,438.1 L278.8,436.7 L279.5,435.3 L280.2,433.9 L280.8,432.4 L281.5,431.0 L282.2,429.6 L282.9,428.2 L283.7,426.8 L284.4,425.4 L285.3,424.0 L286.1,422.7 L287.0,421.3 L287.9,420.1 L288.9,418.8 L290.0,417.6 L291.0,416.4 L292.1,415.3 L293.2,414.1 L294.3,413.0 L295.4,411.9 L296.6,410.8 L297.8,409.7 L299.0,408.7 L300.2,407.7 L301.5,406.7 L302.7,405.8 L304.1,404.9 L305.4,404.1 L306.9,403.4 L308.3,402.8 L309.8,402.2 L311.3,401.8 L312.9,401.4 L314.4,401.1 L316.0,400.9 L317.6,401.0 L319.2,401.2 L320.7,401.6 L322.3,401.5 L324.0,401.3 L325.5,401.8 L327.0,402.5 L328.3,403.4 L329.6,404.4 L331.3,404.5 L333.1,404.4 L334.4,405.3 L335.6,406.4 L336.7,407.7 L337.8,409.0 L339.6,409.1 L341.5,409.0 L342.6,410.2 L343.6,411.5 L344.5,413.0 L345.2,414.6 L347.2,414.7 L349.4,414.6 L350.2,416.0 L350.9,417.6 L351.5,419.3 L351.9,421.1 L354.1,421.2 L356.4,421.2 L357.0,422.8 L357.4,424.6 L357.6,426.4 L357.6,428.4 L360.0,428.5 L362.4,428.8 L362.8,430.5 L362.8,432.4 L362.7,434.3 L362.5,436.2 L364.9,436.6 L367.2,437.3 L367.3,439.0 L367.1,440.8 L366.8,442.7 L366.3,444.6 L368.8,445.3 L370.9,446.2 L370.8,448.0 L370.4,449.8 L369.9,451.6 L369.3,453.4 L371.8,454.3 L373.9,455.4 L373.6,457.1 L373.2,458.9 L372.5,460.6 L371.8,462.5 L374.3,463.5 L376.2,464.7 L375.8,466.4 L375.1,468.2 L374.3,469.9 L373.3,471.5 L375.7,472.9 L377.3,474.4 L376.6,476.0 L375.7,477.6 L374.5,479.1 L373.3,480.5 L375.4,482.3 L376.7,484.2 L375.7,485.6 L374.5,487.0 L373.1,488.3 L371.5,489.4 L373.3,491.6 L374.1,493.6 L372.8,494.8 L371.2,495.8 L369.5,496.7 L367.8,497.2 L368.8,499.9 L368.8,502.0 L367.2,502.7 L365.4,503.2 L363.5,503.4 L361.6,503.5 L361.9,506.4 L361.4,508.5 L359.7,508.8 L357.9,508.9 L356.0,508.8 L354.1,508.5 L353.9,511.5 L353.0,513.4 L351.2,513.3 L349.4,513.1 L347.5,512.6 L345.7,512.0 L345.0,515.0 L343.9,516.7 L342.2,516.5 L340.4,516.1 L338.5,515.5 L336.7,514.8 L336.0,517.9 L334.8,519.5 L333.1,519.3 L331.3,518.9 L329.5,518.3 L327.7,517.6 L326.8,520.7 L325.5,522.1 L323.7,521.6 L322.1,520.9 L320.6,519.8 L319.2,518.6 L317.3,521.2 L315.4,521.8 L314.1,520.6 L313.0,519.1 L312.0,517.5 L311.2,515.7 L308.5,517.5 L306.6,517.5 L305.7,516.0 L304.9,514.3 L304.2,512.6 L303.6,510.9 L300.7,511.9 L299.0,511.5 L298.2,510.0 L297.5,508.4 L296.8,506.8 L296.2,505.2 L293.7,505.5 L292.3,504.6 L291.5,503.1 L290.9,501.6 L290.3,500.1 L289.7,498.6 L287.8,497.9 L286.7,496.7 L286.2,495.2 L285.6,493.7 L285.1,492.2 L284.6,490.7 L283.7,489.4 L283.2,487.9 L282.8,486.3 L282.4,484.8 L282.0,483.2 L281.6,481.7 L281.3,480.2 L281.0,478.6 L280.6,477.0 L280.3,475.5 L280.0,473.9 L279.8,472.4 L279.6,470.8 L279.4,469.2 L279.2,467.6 L279.0,466.1 L278.9,464.5 L278.8,462.9 L278.7,461.3 L278.6,459.7 L278.5,458.1 L278.5,456.5 L278.4,455.0 L278.3,453.4 L278.3,451.8 L278.3,450.2 L278.3,448.6 L278.3,447.0 L278.3,445.4 L278.3,443.8 L278.3,442.3 L278.4,440.7 L278.4,439.1Z" style="fill:var(--lI)"/>
<path d="M471.6,300.6 L470.5,300.4 L471.2,300.8 L472.5,299.9 L473.8,298.9 L475.0,297.9 L476.3,296.9 L477.6,296.0 L478.8,295.0 L480.1,294.0 L481.4,293.1 L482.7,292.1 L483.9,291.2 L485.3,290.3 L486.6,289.4 L488.0,288.6 L489.5,288.0 L490.8,287.1 L492.1,286.0 L493.8,285.8 L495.4,286.2 L496.9,287.0 L498.0,288.1 L499.8,287.6 L502.0,287.3 L502.9,288.9 L503.4,290.6 L503.6,292.3 L503.6,294.1 L505.9,294.6 L507.8,295.5 L508.0,297.2 L508.0,298.9 L507.8,300.7 L507.5,302.5 L509.8,303.4 L511.3,304.6 L511.2,306.3 L510.8,308.0 L510.3,309.7 L509.7,311.4 L511.9,312.7 L513.1,314.3 L512.4,315.9 L511.4,317.4 L510.1,318.3 L508.6,318.7 L508.9,321.3 L507.8,322.8 L506.1,322.8 L504.3,322.5 L502.7,322.0 L501.0,321.3 L499.7,323.8 L498.1,324.6 L496.5,323.9 L494.9,323.0 L493.5,322.1 L492.1,321.2 L490.1,322.7 L488.5,322.6 L487.1,321.7 L485.7,320.8 L484.5,319.8 L483.1,319.0 L481.6,318.3 L480.5,317.3 L479.3,316.1 L478.2,315.0 L477.2,313.7 L476.3,312.4 L475.5,311.1 L474.8,309.6 L474.2,308.2 L473.6,306.7 L473.1,305.2 L472.6,303.6 L472.1,302.1Z" style="fill:var(--lsl)"/>
<path d="M451.2,257.2 L451.0,257.3 L452.2,256.1 L453.2,254.9 L454.4,253.8 L455.7,252.8 L457.2,252.4 L458.8,252.6 L460.3,253.2 L461.8,253.9 L463.1,254.8 L464.6,255.6 L466.1,256.3 L467.3,257.4 L468.3,258.7 L469.0,260.2 L469.7,261.7 L471.5,262.3 L472.7,263.6 L472.9,265.3 L472.7,266.9 L472.0,268.4 L471.1,269.7 L471.7,271.6 L471.0,273.2 L469.5,274.1 L467.8,274.3 L466.3,274.0 L464.8,273.6 L463.0,274.5 L461.4,274.1 L460.0,273.2 L458.7,272.1 L457.6,271.0 L456.2,270.1 L454.9,269.2 L453.9,267.9 L452.9,266.6 L452.2,265.2 L451.7,263.6 L451.4,262.1 L451.3,260.4 L451.3,258.8Z" style="fill:var(--lbud)"/>
<path d="M408.5,324.0 L409.2,324.8 L408.5,324.1 L408.3,322.5 L408.2,320.9 L408.0,319.3 L407.9,317.7 L407.7,316.1 L407.5,314.6 L407.3,313.0 L407.0,311.4 L406.7,309.8 L406.3,308.3 L405.8,306.8 L405.2,305.3 L404.4,303.9 L403.5,302.6 L402.5,301.4 L401.4,300.2 L400.3,299.1 L399.2,297.9 L398.3,296.6 L397.4,295.2 L395.8,294.5 L394.1,294.2 L393.0,293.1 L391.9,291.8 L390.9,290.4 L389.9,288.9 L387.9,289.2 L385.9,289.5 L384.7,288.3 L383.6,287.0 L382.5,285.7 L381.1,284.3 L379.1,285.2 L377.7,286.4 L376.3,286.4 L374.6,286.7 L372.9,287.4 L371.3,288.3 L371.7,290.5 L372.0,292.5 L371.0,293.7 L369.8,295.0 L368.7,296.4 L367.7,298.0 L369.1,299.7 L370.1,301.4 L369.6,302.9 L368.9,304.5 L368.1,306.0 L367.2,307.5 L368.7,309.3 L369.5,311.0 L368.6,312.5 L367.5,313.8 L366.2,314.9 L364.7,315.5 L365.0,317.8 L364.5,319.6 L362.9,320.3 L361.3,320.8 L359.6,321.1 L357.8,321.5 L357.7,323.9 L357.1,325.6 L355.9,326.4 L356.0,327.8 L357.5,328.9 L359.1,329.9 L360.9,328.1 L362.5,327.4 L364.1,328.2 L365.5,329.2 L366.7,330.4 L367.9,331.7 L370.1,330.4 L371.8,330.4 L373.1,331.4 L374.5,332.3 L375.9,333.3 L377.3,334.1 L379.1,333.5 L380.7,333.7 L382.2,334.3 L383.7,334.8 L385.2,335.3 L386.8,335.6 L388.4,335.8 L390.0,336.0 L391.6,336.2 L393.1,336.1 L394.7,335.7 L395.8,334.7 L396.5,333.3 L397.1,331.8 L397.7,330.3 L398.6,329.0 L399.9,328.0 L401.2,327.3 L402.7,326.5 L404.1,325.9 L405.6,325.3 L407.0,324.6Z" style="fill:var(--lcrown)"/>
<path d="M408.5,328.8 L408.1,329.6 L408.5,329.0 L408.2,327.4 L407.9,325.9 L407.5,324.3 L407.1,322.8 L406.8,321.2 L406.4,319.7 L406.1,318.1 L405.9,316.6 L405.6,315.0 L405.5,313.4 L405.5,311.8 L405.7,310.2 L406.6,308.9 L408.0,308.2 L409.6,308.1 L411.2,308.2 L412.7,308.5 L414.3,308.7 L415.9,309.0 L417.5,309.3 L419.0,309.5 L420.6,309.6 L422.2,309.7 L423.8,309.8 L425.4,309.9 L427.0,310.1 L428.6,310.2 L430.2,310.4 L431.7,310.5 L433.3,310.7 L434.9,310.8 L436.5,311.0 L438.1,311.1 L439.7,311.1 L441.3,311.3 L442.8,311.6 L444.4,312.0 L446.0,312.5 L447.6,312.1 L449.2,311.8 L450.8,312.1 L452.4,312.5 L453.9,313.0 L455.5,313.7 L457.1,312.7 L458.8,312.0 L460.3,312.5 L461.9,313.2 L463.4,314.0 L464.8,314.9 L466.6,313.7 L468.4,313.4 L469.8,314.5 L470.8,315.9 L471.4,317.4 L471.6,319.0 L473.7,319.5 L475.1,320.7 L475.3,322.3 L475.6,324.0 L476.1,325.7 L476.7,327.4 L479.0,327.4 L480.6,328.2 L481.1,330.0 L480.3,331.5 L478.9,332.0 L477.3,332.3 L476.8,334.5 L475.5,335.7 L473.8,335.7 L472.1,335.5 L470.5,335.1 L469.0,334.5 L467.4,336.1 L465.7,336.4 L464.2,335.6 L462.8,334.8 L461.3,333.9 L459.7,333.1 L458.0,334.6 L456.4,334.9 L454.8,334.8 L453.2,334.9 L451.6,335.5 L450.2,336.8 L450.4,338.6 L450.0,340.1 L449.3,341.6 L448.7,343.1 L448.1,344.6 L447.5,346.1 L448.2,347.9 L448.1,349.5 L447.6,351.0 L447.0,352.5 L446.4,354.0 L445.8,355.5 L446.6,357.3 L446.3,358.9 L444.9,360.1 L443.6,359.4 L443.0,358.0 L442.3,356.6 L440.8,355.6 L440.1,354.1 L439.7,352.6 L439.2,351.1 L438.7,349.5 L438.0,348.1 L437.2,346.7 L436.6,345.2 L436.0,343.8 L435.3,342.4 L434.5,341.0 L433.6,339.6 L432.5,338.5 L431.2,337.5 L429.8,336.9 L428.2,336.5 L426.7,336.4 L425.1,336.4 L423.5,336.4 L421.9,336.5 L420.3,336.5 L418.7,336.2 L417.2,335.7 L415.9,334.9 L414.5,334.0 L413.3,333.0 L412.1,332.0 L410.9,330.9 L409.7,329.8Z" style="fill:var(--lcrown2)"/>
</g>
<use id="plantThumb_blue" href="#plantShapes" style="--lA:#0a0ad8;--lB:#0a0ad8;--lC:#0a0ad8;--lS:#0a0ad8;--lD:#0a0ad8;--lE:#0a0ad8;--lF:#0a0ad8;--lG:#0a0ad8;--lH:#0a0ad8;--lI:#0a0ad8;--lsl:#0a0ad8;--lbud:#0a0ad8;--lcrown:#0a0ad8;--lcrown2:#0a0ad8;--st:#0000c0"/>
<use id="plantThumb_orange" href="#plantShapes" style="--lA:#ffa000;--lB:#ffc000;--lC:#ff9000;--lS:#ffb000;--lD:#ffb800;--lE:#d8f800;--lF:#ff9000;--lG:#d0f000;--lH:#e8f000;--lI:#f0e000;--lsl:#ffb000;--lbud:#ffb000;--lcrown:#ffb000;--lcrown2:#ffb000;--st:#a0f000"/>
<use id="plantThumb_yellow" href="#plantShapes" style="--lA:#f8e000;--lB:#e8f000;--lC:#ffb000;--lS:#f0f000;--lD:#f0f000;--lE:#b0ff00;--lF:#ffa000;--lG:#c0ff00;--lH:#d8ff00;--lI:#d8f800;--lsl:#f0f000;--lbud:#f0f000;--lcrown:#f0f000;--lcrown2:#f0f000;--st:#90f000"/>
<filter id="grain" x="0" y="0" width="100%" height="100%" color-interpolation-filters="sRGB"><feTurbulence type="fractalNoise" baseFrequency="0.8" numOctaves="1" seed="3" result="n"/><feColorMatrix in="n" type="matrix" values="1 0 0 0 0  1 0 0 0 0  1 0 0 0 0  0 0 0 0 1" result="ng"/><feComposite in="SourceGraphic" in2="ng" operator="arithmetic" k1="0" k2="1" k3="0.2" k4="-0.1" result="c"/><feComposite in="c" in2="SourceGraphic" operator="in"/></filter>
<filter id="ylA" color-interpolation-filters="sRGB"><feColorMatrix type="matrix" values="1 0 0 0 0  0.12 1 0 0 0  0 0 1 0 0  0 0 0 1 0"/></filter>
<filter id="ylB" color-interpolation-filters="sRGB"><feColorMatrix type="matrix" values="0.95 0 0 0 0  0.3 1 0 0 0  0 0 1 0 0  0 0 0 1 0"/></filter>
</defs></svg>
<div class="b" style="left:0px;top:0px;width:1920px;height:29px;background:#f3f3f3;"></div>
<div class="b" style="left:0px;top:29px;width:1920px;height:1px;background:#e3e3e3;"></div>
<svg style="left:4px;top:4px" width="16" height="20" viewBox="0 0 16 20">
<path d="M10.5,5 L14,1" stroke="#b8a020" stroke-width="1.6"/>
<path d="M3,18 C1,14 0.5,9 1.5,6 C3,3.5 6,3.5 8.5,6 C10,3.5 13,4 14,6.5 C15,9.5 12,14 3,18Z" fill="#008a00"/>
<path d="M4,8 C5,6.5 6.5,6 7,7" stroke="#30e030" stroke-width="1.6" fill="none"/>
<path d="M10,8 C11,7 12.5,7 13,8" stroke="#30e030" stroke-width="1.6" fill="none"/>
<path d="M9,6 C8,10 6,13 3,17" stroke="#8ab08a" stroke-width="0.8" fill="none"/>
</svg>
<div class="t" style="left:27.5px;top:7.30px;font-size:15px;color:#000;letter-spacing:-0.45px;">FluorCam10</div>
<div class="b" style="left:1801px;top:0px;width:58px;height:27px;background:#e5e5e5;"></div>
<div class="b" style="left:1765px;top:13px;width:12px;height:1px;background:#000;"></div>
<svg style="left:1822px;top:7px" width="14" height="14" viewBox="0 0 14 14">
<rect x="1.5" y="3.5" width="8.5" height="8.5" rx="1.3" fill="none" stroke="#000" stroke-width="1"/>
<path d="M3.8,1.5 H10 Q12.5,1.5 12.5,4 V10" fill="none" stroke="#000" stroke-width="1"/>
</svg>
<svg style="left:1881px;top:7px" width="14" height="14" viewBox="0 0 14 14">
<path d="M1,1 L13,13 M13,1 L1,13" stroke="#000" stroke-width="1.1"/>
</svg>
<div class="b" style="left:0px;top:30px;width:1920px;height:29px;background:linear-gradient(to right,#f0f0f0 0%,#f4f4f4 30%,#fafafa 70%,#fbfbfb 100%);"></div>
<div class="t" style="left:18.5px;top:36.30px;font-size:15px;color:#000;letter-spacing:-0.1px;">Experiment</div>
<div class="t" style="left:117.5px;top:36.30px;font-size:15px;color:#000;letter-spacing:-0.1px;">Setup</div>
<div class="t" style="left:178.5px;top:36.30px;font-size:15px;color:#000;letter-spacing:-0.1px;">Protocols</div>
<div class="t" style="left:283px;top:36.30px;font-size:15px;color:#000;letter-spacing:-0.1px;">Wizard</div>
<div class="t" style="left:371px;top:36.30px;font-size:15px;color:#000;letter-spacing:-0.1px;">Start</div>
<div class="t" style="left:428px;top:36.30px;font-size:15px;color:#000;letter-spacing:-0.1px;">Stop</div>
<div class="t" style="left:482px;top:36.30px;font-size:15px;color:#000;letter-spacing:-0.1px;">Help</div>
<div class="t" style="left:554px;top:36.30px;font-size:15px;color:#8c8c8c;letter-spacing:-0.1px;">Start Auto</div>
<svg style="left:259px;top:34px" width="20" height="20" viewBox="0 0 20 20">
<path d="M7,8 L16,17" stroke="#222" stroke-width="2.2" stroke-linecap="round"/>
<path d="M5,2 L6,5 L9,5 L6.8,7 L7.5,10 L5,8 L2.5,10 L3.2,7 L1,5 L4,5Z" fill="#ffd020" stroke="#e04020" stroke-width="0.8"/>
</svg>
<svg style="left:349px;top:35px" width="16" height="17" viewBox="0 0 16 17">
<path d="M2,1.5 L14,8.5 L2,15.5Z" fill="none" stroke="#333" stroke-width="1.8" stroke-linejoin="miter"/>
</svg>
<svg style="left:532px;top:35px" width="16" height="17" viewBox="0 0 16 17">
<path d="M2,1.5 L14,8.5 L2,15.5Z" fill="none" stroke="#a8a8a8" stroke-width="1.8" stroke-linejoin="miter"/>
</svg>
<div class="b" style="left:0px;top:59px;width:1920px;height:27px;background:#f0f0f0;"></div>
<div class="b" style="left:3px;top:62px;width:119px;height:23px;background:#f2f2f2;border:1px solid #e3e3e3;border-bottom:none;"></div>
<div class="t" style="left:62.5px;top:67.15px;font-size:14px;color:#000;letter-spacing:-0.5px;transform:translateX(-50%);">Live</div>
<div class="b" style="left:122px;top:62px;width:120px;height:23px;background:#f2f2f2;border:1px solid #e3e3e3;border-bottom:none;"></div>
<div class="t" style="left:182.0px;top:67.15px;font-size:14px;color:#000;letter-spacing:-0.5px;transform:translateX(-50%);">Protocols</div>
<div class="b" style="left:242px;top:62px;width:119px;height:23px;background:#f2f2f2;border:1px solid #e3e3e3;border-bottom:none;"></div>
<div class="t" style="left:301.5px;top:67.15px;font-size:14px;color:#000;letter-spacing:-0.5px;transform:translateX(-50%);">Pre-Processing</div>
<div class="b" style="left:361px;top:60px;width:123px;height:26px;background:#f9f9f9;border:1px solid #e3e3e3;border-bottom:none;"></div>
<div class="t" style="left:422.5px;top:65.15px;font-size:14px;color:#000;letter-spacing:-0.5px;transform:translateX(-50%);">Result</div>
<div class="b" style="left:1px;top:85px;width:1915px;height:993px;background:#f0f0f0;border-left:1px solid #fcfcfc;border-top:1px solid #fcfcfc;border-right:1px solid #dadada;border-bottom:1px solid #dadada;"></div>
<div class="b" style="left:0px;top:85px;width:1px;height:993px;background:#d9d9d9;"></div>
<div class="b" style="left:9px;top:90px;width:1299px;height:641px;border-top:2px solid #7f7f7f;border-left:2px solid #7f7f7f;border-right:1px solid #fdfdfd;border-bottom:1px solid #fdfdfd;background:#f0f0f0;"></div>
<svg style="left:276px;top:106px" width="765" height="576" viewBox="0 0 765 576">
<rect width="765" height="576" fill="#000"/>
<use href="#plantMain" filter="url(#grain)"/>
</svg>
<svg style="left:672px;top:378px" width="72" height="36" viewBox="0 0 72 36">
<path d="M8,1 H53 V17 H71 V35 H8 V17 L2,10 L8,4Z" fill="#0000f0"/>
</svg>
<div class="t" style="left:682px;top:382.00px;font-size:13px;color:#fff;letter-spacing:-0.1px;">Area 1</div>
<div class="t" style="left:682px;top:399.00px;font-size:13px;color:#fff;letter-spacing:-0.3px;">11465.88</div>
<div class="b" style="left:11px;top:699px;width:1295px;height:1px;background:#d5d5d5;"></div>
<div class="t" style="left:18.5px;top:707.80px;font-size:15px;color:#000;letter-spacing:-0.1px;">Zoom 45 %</div>
<div class="b" style="left:99px;top:703px;width:1px;height:22px;background:#a0a0a0;"></div>
<div class="t" style="left:107.5px;top:707.80px;font-size:15px;color:#000;letter-spacing:-0.45px;">Resolution: 1360 x 1024</div>
<div class="b" style="left:265.5px;top:703px;width:1px;height:22px;background:#a0a0a0;"></div>
<div class="b" style="left:270px;top:703px;width:1px;height:22px;background:#a0a0a0;"></div>
<div class="b" style="left:9px;top:745px;width:1299px;height:327px;border-top:2px solid #7f7f7f;border-left:2px solid #7f7f7f;border-right:1px solid #fdfdfd;border-bottom:1px solid #fdfdfd;background:#f0f0f0;"></div>
<div class="b" style="left:68px;top:750px;width:62px;height:23px;background:#f2f2f2;border:1px solid #e3e3e3;border-bottom:none;"></div>
<div class="t" style="left:99.0px;top:754.65px;font-size:14px;color:#000;letter-spacing:-0.5px;transform:translateX(-50%);">Numeric</div>
<div class="b" style="left:130px;top:750px;width:90px;height:23px;background:#f2f2f2;border:1px solid #e3e3e3;border-bottom:none;"></div>
<div class="t" style="left:175.0px;top:754.65px;font-size:14px;color:#000;letter-spacing:-0.5px;transform:translateX(-50%);">Numeric Avg</div>
<div class="b" style="left:220px;top:750px;width:74px;height:23px;background:#f2f2f2;border:1px solid #e3e3e3;border-bottom:none;"></div>
<div class="t" style="left:257.0px;top:754.65px;font-size:14px;color:#000;letter-spacing:-0.5px;transform:translateX(-50%);">Histogram</div>
<div class="b" style="left:294px;top:750px;width:64px;height:23px;background:#f2f2f2;border:1px solid #e3e3e3;border-bottom:none;"></div>
<div class="t" style="left:326.0px;top:754.65px;font-size:14px;color:#000;letter-spacing:-0.5px;transform:translateX(-50%);">Notepad</div>
<div class="b" style="left:12px;top:748px;width:56px;height:26px;background:#f9f9f9;border:1px solid #e3e3e3;border-bottom:none;"></div>
<div class="t" style="left:39.5px;top:752.15px;font-size:14px;color:#000;letter-spacing:-0.5px;transform:translateX(-50%);">Graph</div>
<div class="b" style="left:15px;top:773px;width:1289px;height:293px;background:#f0f0f0;border:1px solid #e6e6e6;border-top:1px solid #f9f9f9;"></div>
<div class="b" style="left:38.5px;top:783.5px;width:27.0px;height:28px;background:#fdfdfd;border:1px solid #d6d6d6;border-radius:4px;"></div>
<div class="b" style="left:75.5px;top:783.5px;width:27.5px;height:28px;background:#fdfdfd;border:1px solid #d6d6d6;border-radius:4px;"></div>
<div class="b" style="left:118px;top:783.5px;width:36px;height:28px;background:#fdfdfd;border:1px solid #d6d6d6;border-radius:4px;"></div>
<div class="b" style="left:162px;top:783.5px;width:36px;height:28px;background:#fdfdfd;border:1px solid #d6d6d6;border-radius:4px;"></div>
<div class="b" style="left:205px;top:783.5px;width:37px;height:28px;background:#fcfcfc;border:1.5px solid #2b7fd6;border-radius:4px;"></div>
<div class="b" style="left:249.5px;top:783.5px;width:36.0px;height:28px;background:#fdfdfd;border:1px solid #d6d6d6;border-radius:4px;"></div>
<div class="b" style="left:294px;top:783.5px;width:27.5px;height:28px;background:#fdfdfd;border:1px solid #d6d6d6;border-radius:4px;"></div>
<svg style="left:38.8px;top:783.75px" width="27" height="27" viewBox="0 0 27 27">
<path d="M2.5,14.7 H5.3 V8.4 H12.8 V14.7 H20.9 V8.4 H22" fill="none" stroke="#111" stroke-width="1.4"/>
<path d="M17.8,5.6 V6.4" stroke="#3a5a8a" stroke-width="1"/>
<path d="M21.5,9.5 L23.5,5 H25" fill="none" stroke="#1a3a6a" stroke-width="1.2"/>
<path d="M2.5,22.5 H5.3 V17.5 H7.6 V22.5 H9.6 V17.5 H11.9 V22.5 H13.9 V17.5 H16.2 V22.5 H18.2 V17.5 H20.5 V22.5 H22.5 V17.5 H24.2 V22.5" fill="none" stroke="#111" stroke-width="1.5"/>
</svg>
<svg style="left:75.7px;top:783.75px" width="27" height="27" viewBox="0 0 27 27">
<path d="M3.4,4.7 H22.8 M3.4,9.7 H22.8 M3.4,14.7 H22.8" stroke="#666" stroke-width="0.9"/>
<path d="M6.6,4.5 V20 M3.4,19.7 H22.8" stroke="#222" stroke-width="1.3"/>
<path d="M8.8,20 V22 M13.2,20 V22 M17.6,20 V22 M22,20 V22" stroke="#555" stroke-width="0.8"/>
<path d="M6.9,12.5 L9.7,7.5 L12.2,11.9 L16,17.5 L19,11.2 L21.6,7.5" fill="none" stroke="#2020ff" stroke-width="1.4"/>
<path d="M6.9,17.5 L10.3,13.1 L12.8,14.7 L16,9.7 L19,12.5 L22.2,9.4" fill="none" stroke="#f01010" stroke-width="1.4"/>
</svg>
<svg style="left:118.8px;top:783.75px" width="36" height="27" viewBox="0 0 36 27">
<path d="M8.8,5 H23.4 M8.8,23.7 H23.4" stroke="#111" stroke-width="1.6"/>
<path d="M16.4,9 V12 M16.4,16.5 V19.5" stroke="#111" stroke-width="1.3"/>
<path d="M13.2,9.7 L16.4,6.2 L19.6,9.7Z M13.2,19.4 L16.4,22.6 L19.6,19.4Z" fill="#111"/>
</svg>
<svg style="left:161.9px;top:783.9px" width="36" height="27" viewBox="0 0 36 27">
<path d="M9.6,5.2 V20.1 M28.4,5.2 V20.1" stroke="#111" stroke-width="1.6"/>
<path d="M16.6,12.25 H15 M22.3,12.25 H24" stroke="#111" stroke-width="1.2"/>
<path d="M10.6,12.25 L15.2,9.4 L15.2,15.1Z M28,12.25 L23.4,9.4 L23.4,15.1Z" fill="#111"/>
</svg>
<svg style="left:205.2px;top:783.9px" width="37" height="27" viewBox="0 0 37 27">
<path d="M11.4,3.1 H25.8 M11.4,22.3 H25.8 M8.75,5.7 V20.1 M28,5.7 V20.1" stroke="#111" stroke-width="1.5"/>
<path d="M19.2,8 V10.5 M19.2,14 V17 M14.5,12.25 H12.5 M22,12.25 H24" stroke="#111" stroke-width="1.1"/>
<path d="M16.6,8.8 L19.2,4.4 L21.8,8.8Z M16.6,16.6 L19.2,21 L21.8,16.6Z M14.6,9.7 L10.3,12.25 L14.6,14.8Z M22.5,9.7 L26.8,12.25 L22.5,14.8Z" fill="#111"/>
</svg>
<div class="t" style="left:257.3px;top:790.67px;font-size:14.8px;color:#111;letter-spacing:-0.9px;">L/L</div>
<svg style="left:294.9px;top:783.9px" width="26" height="27" viewBox="0 0 26 27">
<rect x="7.1" y="4" width="10.8" height="6" fill="#fff" stroke="#8a8a8a" stroke-width="1.1"/>
<rect x="3" y="9.5" width="19" height="8.8" rx="2" fill="#e4e4e4" stroke="#8a8a8a" stroke-width="1.1"/>
<rect x="7" y="11" width="11" height="1.8" fill="#8a8a9a"/>
<rect x="7" y="12.8" width="11" height="2" fill="#5a5a3a"/>
<rect x="8.2" y="17.5" width="8.6" height="4.8" fill="#fff" stroke="#8a8a8a" stroke-width="1.1"/>
<path d="M10.5,19.3 H14.5" stroke="#30a0c0" stroke-width="1.3" stroke-dasharray="1.2,0.8"/>
</svg>
<div class="t" style="left:659.5px;top:788.40px;font-size:14.3px;color:#000;font-weight:bold;letter-spacing:-0.2px;transform:translateX(-50%);">Kinetics</div>
<div class="b" style="left:1193px;top:790px;width:16px;height:16px;background:#f6f6f6;border:1px solid #5a5a5a;border-radius:3px;"></div>
<div class="t" style="left:1216px;top:791.57px;font-size:13.5px;color:#000;letter-spacing:-0.35px;">Normalize</div>
<svg style="left:0px;top:0px" width="1920" height="1080" viewBox="0 0 1920 1080">
<rect x="128" y="817" width="1160" height="204" fill="#fff"/>
<path d="M159.5,817 V1021" stroke="#707070" stroke-width="1" stroke-dasharray="4,2,1,2"/>
<path d="M221.5,817 V1021" stroke="#707070" stroke-width="1" stroke-dasharray="4,2,1,2"/>
<path d="M283.6,817 V1021" stroke="#707070" stroke-width="1" stroke-dasharray="4,2,1,2"/>
<path d="M345.6,817 V1021" stroke="#707070" stroke-width="1" stroke-dasharray="4,2,1,2"/>
<path d="M407.6,817 V1021" stroke="#707070" stroke-width="1" stroke-dasharray="4,2,1,2"/>
<path d="M469.7,817 V1021" stroke="#707070" stroke-width="1" stroke-dasharray="4,2,1,2"/>
<path d="M531.7,817 V1021" stroke="#707070" stroke-width="1" stroke-dasharray="4,2,1,2"/>
<path d="M593.7,817 V1021" stroke="#707070" stroke-width="1" stroke-dasharray="4,2,1,2"/>
<path d="M655.7,817 V1021" stroke="#707070" stroke-width="1" stroke-dasharray="4,2,1,2"/>
<path d="M717.8,817 V1021" stroke="#707070" stroke-width="1" stroke-dasharray="4,2,1,2"/>
<path d="M779.8,817 V1021" stroke="#707070" stroke-width="1" stroke-dasharray="4,2,1,2"/>
<path d="M841.8,817 V1021" stroke="#707070" stroke-width="1" stroke-dasharray="4,2,1,2"/>
<path d="M903.9,817 V1021" stroke="#707070" stroke-width="1" stroke-dasharray="4,2,1,2"/>
<path d="M965.9,817 V1021" stroke="#707070" stroke-width="1" stroke-dasharray="4,2,1,2"/>
<path d="M1027.9,817 V1021" stroke="#707070" stroke-width="1" stroke-dasharray="4,2,1,2"/>
<path d="M1090.0,817 V1021" stroke="#707070" stroke-width="1" stroke-dasharray="4,2,1,2"/>
<path d="M1152.0,817 V1021" stroke="#707070" stroke-width="1" stroke-dasharray="4,2,1,2"/>
<path d="M1214.0,817 V1021" stroke="#707070" stroke-width="1" stroke-dasharray="4,2,1,2"/>
<path d="M1276.0,817 V1021" stroke="#707070" stroke-width="1" stroke-dasharray="4,2,1,2"/>
<path d="M128,1003.6 H1288" stroke="#707070" stroke-width="1" stroke-dasharray="4,2,1,2"/>
<path d="M128,929.7 H1288" stroke="#707070" stroke-width="1" stroke-dasharray="4,2,1,2"/>
<path d="M128,855.8 H1288" stroke="#707070" stroke-width="1" stroke-dasharray="4,2,1,2"/>
<path d="M118,1003.6 H128 M122,988.8 H128 M122,974.0 H128 M122,959.3 H128 M122,944.5 H128 M118,929.7 H128 M122,914.9 H128 M122,900.1 H128 M122,885.4 H128 M122,870.6 H128 M118,855.8 H128 M122,841.0 H128 M122,826.2 H128 M134.7,1021 V1024 M147.1,1021 V1024 M159.5,1021 V1027 M171.9,1021 V1024 M184.3,1021 V1024 M196.7,1021 V1024 M209.1,1021 V1024 M221.5,1021 V1027 M233.9,1021 V1024 M246.3,1021 V1024 M258.7,1021 V1024 M271.2,1021 V1024 M283.6,1021 V1027 M296.0,1021 V1024 M308.4,1021 V1024 M320.8,1021 V1024 M333.2,1021 V1024 M345.6,1021 V1027 M358.0,1021 V1024 M370.4,1021 V1024 M382.8,1021 V1024 M395.2,1021 V1024 M407.6,1021 V1027 M420.0,1021 V1024 M432.4,1021 V1024 M444.8,1021 V1024 M457.2,1021 V1024 M469.7,1021 V1027 M482.1,1021 V1024 M494.5,1021 V1024 M506.9,1021 V1024 M519.3,1021 V1024 M531.7,1021 V1027 M544.1,1021 V1024 M556.5,1021 V1024 M568.9,1021 V1024 M581.3,1021 V1024 M593.7,1021 V1027 M606.1,1021 V1024 M618.5,1021 V1024 M630.9,1021 V1024 M643.3,1021 V1024 M655.7,1021 V1027 M668.1,1021 V1024 M680.6,1021 V1024 M693.0,1021 V1024 M705.4,1021 V1024 M717.8,1021 V1027 M730.2,1021 V1024 M742.6,1021 V1024 M755.0,1021 V1024 M767.4,1021 V1024 M779.8,1021 V1027 M792.2,1021 V1024 M804.6,1021 V1024 M817.0,1021 V1024 M829.4,1021 V1024 M841.8,1021 V1027 M854.2,1021 V1024 M866.6,1021 V1024 M879.0,1021 V1024 M891.5,1021 V1024 M903.9,1021 V1027 M916.3,1021 V1024 M928.7,1021 V1024 M941.1,1021 V1024 M953.5,1021 V1024 M965.9,1021 V1027 M978.3,1021 V1024 M990.7,1021 V1024 M1003.1,1021 V1024 M1015.5,1021 V1024 M1027.9,1021 V1027 M1040.3,1021 V1024 M1052.7,1021 V1024 M1065.1,1021 V1024 M1077.5,1021 V1024 M1090.0,1021 V1027 M1102.4,1021 V1024 M1114.8,1021 V1024 M1127.2,1021 V1024 M1139.6,1021 V1024 M1152.0,1021 V1027 M1164.4,1021 V1024 M1176.8,1021 V1024 M1189.2,1021 V1024 M1201.6,1021 V1024 M1214.0,1021 V1027 M1226.4,1021 V1024 M1238.8,1021 V1024 M1251.2,1021 V1024 M1263.6,1021 V1024 M1276.0,1021 V1027" stroke="#222" stroke-width="1.2"/>
<rect x="127.5" y="817.3" width="1160.5" height="203.5" fill="none" stroke="#000" stroke-width="2"/>
<path d="M128.3,976.8 L159.5,976.3 L160.5,960.0 L162.0,835.0 L163.9,836.3 L166.0,919.3 L168.5,932.2 L175.0,943.9 L191.9,955.6 L220.4,963.9 L265.8,969.0 L271.7,947.8 L272.2,898.5 L274.3,870.0 L276.9,866.1 L280.0,867.9 L293.0,876.5 L324.0,892.0 L326.2,867.4 L329.3,867.9 L333.2,897.2 L357.8,915.4 L386.3,932.2 L388.9,918.0 L391.5,918.0 L394.1,933.5 L409.6,941.3 L449.8,951.7 L452.4,936.1 L455.0,936.1 L457.6,952.5 L479.6,956.9 L531.9,963.0 L574.8,965.9 L576.3,947.3 L578.4,947.3 L581.3,963.9 L607.4,967.4 L654.8,968.9 L699.3,968.9 L700.7,946.7 L702.8,946.7 L708.7,973.3 L717.0,974.8 L897.8,973.3 L900.1,893.3 L902.2,892.7 L905.2,957.0 L915.6,967.4 L960.0,969.8 L1084.4,972.7 L1085.9,875.0 L1088.9,875.0 L1090.4,957.9 L1100.7,967.4 L1152.6,971.0 L1271.1,972.7 L1273.2,868.1 L1275.0,868.1 L1277.0,960.0 L1287.4,967.4" fill="none" stroke="#3838f8" stroke-width="1.6" stroke-linejoin="round"/>
<path d="M625,1052.5 H646" stroke="#0000ff" stroke-width="2.5"/>
<path d="M1350,1064.7 H1362 M1350,1047.0 H1357 M1350,1029.3 H1357 M1350,1011.6 H1357 M1350,993.9 H1357 M1350,976.2 H1362 M1350,958.5 H1357 M1350,940.8 H1357 M1350,923.1 H1357 M1350,905.4 H1357 M1350,887.7 H1362 M1350,870.0 H1357 M1350,852.3 H1357 M1350,834.6 H1357 M1350,816.9 H1357 M1350,799.2 H1362 M1350,781.5 H1357 M1350,763.8 H1357 M1350,746.1 H1357 M1350,728.4 H1357 M1350,710.7 H1362 M1350,693.0 H1357 M1350,675.3 H1357 M1350,657.6 H1357 M1350,639.9 H1357 M1350,622.2 H1362 M1350,604.5 H1357 M1350,586.8 H1357 M1350,569.1 H1357 M1350,551.4 H1357 M1350,533.7 H1362 M1350,516.0 H1357 M1350,498.3 H1357 M1350,480.6 H1357 M1350,462.9 H1357 M1350,445.2 H1362 M1350,427.5 H1357 M1350,409.8 H1357 M1350,392.1 H1357 M1350,374.4 H1357 M1350,356.7 H1362 M1350,339.0 H1357 M1350,321.3 H1357 M1350,303.6 H1357 M1350,285.9 H1357 M1350,268.2 H1362 M1350,250.5 H1357 M1350,232.8 H1357 M1350,215.1 H1357 M1350,197.4 H1357 M1350,179.7 H1362 M1350,162.0 H1357 M1350,144.3 H1357" stroke="#333" stroke-width="1.3"/>
</svg>
<div class="t" style="left:112.5px;top:997.23px;font-size:13.2px;color:#000;letter-spacing:-0.2px;transform:translateX(-100%);">0</div>
<div class="t" style="left:112.5px;top:923.33px;font-size:13.2px;color:#000;letter-spacing:-0.2px;transform:translateX(-100%);">5000</div>
<div class="t" style="left:112.5px;top:849.43px;font-size:13.2px;color:#000;letter-spacing:-0.2px;transform:translateX(-100%);">10000</div>
<div class="t" style="left:159.0px;top:1024.83px;font-size:13.2px;color:#000;letter-spacing:-0.3px;transform:translateX(-50%);">10</div>
<div class="t" style="left:221.03px;top:1024.83px;font-size:13.2px;color:#000;letter-spacing:-0.3px;transform:translateX(-50%);">20</div>
<div class="t" style="left:283.06px;top:1024.83px;font-size:13.2px;color:#000;letter-spacing:-0.3px;transform:translateX(-50%);">30</div>
<div class="t" style="left:345.09000000000003px;top:1024.83px;font-size:13.2px;color:#000;letter-spacing:-0.3px;transform:translateX(-50%);">40</div>
<div class="t" style="left:407.12px;top:1024.83px;font-size:13.2px;color:#000;letter-spacing:-0.3px;transform:translateX(-50%);">50</div>
<div class="t" style="left:469.15000000000003px;top:1024.83px;font-size:13.2px;color:#000;letter-spacing:-0.3px;transform:translateX(-50%);">60</div>
<div class="t" style="left:531.1800000000001px;top:1024.83px;font-size:13.2px;color:#000;letter-spacing:-0.3px;transform:translateX(-50%);">70</div>
<div class="t" style="left:593.21px;top:1024.83px;font-size:13.2px;color:#000;letter-spacing:-0.3px;transform:translateX(-50%);">80</div>
<div class="t" style="left:655.24px;top:1024.83px;font-size:13.2px;color:#000;letter-spacing:-0.3px;transform:translateX(-50%);">90</div>
<div class="t" style="left:717.27px;top:1024.83px;font-size:13.2px;color:#000;letter-spacing:-0.3px;transform:translateX(-50%);">100</div>
<div class="t" style="left:779.3000000000001px;top:1024.83px;font-size:13.2px;color:#000;letter-spacing:-0.3px;transform:translateX(-50%);">110</div>
<div class="t" style="left:841.33px;top:1024.83px;font-size:13.2px;color:#000;letter-spacing:-0.3px;transform:translateX(-50%);">120</div>
<div class="t" style="left:903.36px;top:1024.83px;font-size:13.2px;color:#000;letter-spacing:-0.3px;transform:translateX(-50%);">130</div>
<div class="t" style="left:965.39px;top:1024.83px;font-size:13.2px;color:#000;letter-spacing:-0.3px;transform:translateX(-50%);">140</div>
<div class="t" style="left:1027.42px;top:1024.83px;font-size:13.2px;color:#000;letter-spacing:-0.3px;transform:translateX(-50%);">150</div>
<div class="t" style="left:1089.45px;top:1024.83px;font-size:13.2px;color:#000;letter-spacing:-0.3px;transform:translateX(-50%);">160</div>
<div class="t" style="left:1151.48px;top:1024.83px;font-size:13.2px;color:#000;letter-spacing:-0.3px;transform:translateX(-50%);">170</div>
<div class="t" style="left:1213.51px;top:1024.83px;font-size:13.2px;color:#000;letter-spacing:-0.3px;transform:translateX(-50%);">180</div>
<div class="t" style="left:1275.54px;top:1024.83px;font-size:13.2px;color:#000;letter-spacing:-0.3px;transform:translateX(-50%);">190</div>
<div class="t" style="left:40px;top:888px;font-size:13.6px;transform:translate(-50%,-50%) rotate(-90deg);letter-spacing:0px;">fluorescence yield a.u.</div>
<div class="t" style="left:1247px;top:1043.84px;font-size:12px;color:#000;letter-spacing:-0.2px;">time [s]</div>
<div class="t" style="left:650px;top:1046.84px;font-size:12px;color:#000;letter-spacing:-0.3px;">Area 1</div>
<div class="b" style="left:1316px;top:132.7px;width:34px;height:932.3px;background:linear-gradient(to top,#000000 0.03%,#000010 2.88%,#000070 7.15%,#0000ff 12.85%,#0040c0 16.17%,#008080 19.02%,#00c040 22.34%,#00ff00 25.66%,#30ff00 28.51%,#a0ff00 38.00%,#ffff00 49.39%,#ffd000 56.99%,#ffa000 66.48%,#ff8000 75.97%,#ff4800 85.47%,#ff0000 99.71%);"></div>
<div class="t" style="left:1365px;top:1058.07px;font-size:13.5px;color:#000;letter-spacing:-0.3px;">0</div>
<div class="t" style="left:1365px;top:969.57px;font-size:13.5px;color:#000;letter-spacing:-0.3px;">2000</div>
<div class="t" style="left:1365px;top:881.07px;font-size:13.5px;color:#000;letter-spacing:-0.3px;">4000</div>
<div class="t" style="left:1365px;top:792.57px;font-size:13.5px;color:#000;letter-spacing:-0.3px;">6000</div>
<div class="t" style="left:1365px;top:704.07px;font-size:13.5px;color:#000;letter-spacing:-0.3px;">8000</div>
<div class="t" style="left:1365px;top:615.57px;font-size:13.5px;color:#000;letter-spacing:-0.3px;">10000</div>
<div class="t" style="left:1365px;top:527.07px;font-size:13.5px;color:#000;letter-spacing:-0.3px;">12000</div>
<div class="t" style="left:1365px;top:438.57px;font-size:13.5px;color:#000;letter-spacing:-0.3px;">14000</div>
<div class="t" style="left:1365px;top:350.07px;font-size:13.5px;color:#000;letter-spacing:-0.3px;">16000</div>
<div class="t" style="left:1365px;top:261.57px;font-size:13.5px;color:#000;letter-spacing:-0.3px;">18000</div>
<div class="t" style="left:1365px;top:173.07px;font-size:13.5px;color:#000;letter-spacing:-0.3px;">20000</div>
<svg style="left:1326px;top:103px" width="19" height="19" viewBox="0 0 19 19">
<path d="M1.5,2 L9.5,9.5 L1.5,17 M8.5,2 L16.5,9.5 L8.5,17" fill="none" stroke="#262626" stroke-width="1.6"/>
</svg>
<div class="b" style="left:1419px;top:94px;width:491px;height:536px;border-top:1.5px solid #6a6a6a;border-left:1.5px solid #6a6a6a;border-right:1.5px solid #9a9a9a;border-bottom:1.5px solid #9a9a9a;background:#f0f0f0;"></div>
<div class="b" style="left:1888px;top:96px;width:1px;height:532px;background:#f8f8f8;"></div>
<div class="b" style="left:1897.6px;top:116.5px;width:2.6px;height:52px;background:#888;border-radius:1.3px;"></div>
<div class="b" style="left:1420.3px;top:129px;width:153px;height:138px;background:#fff;"></div>
<svg style="left:1421.3px;top:130px" width="151" height="114" viewBox="0 0 765 576"><rect width="765" height="576" fill="#000"/><use href="#plantThumb_blue" transform="translate(7,6)" filter="url(#grain)"/></svg>
<div class="b" style="left:1421.3px;top:244px;width:151px;height:22.2px;background:#00ffff;"></div>
<div class="t" style="left:1496.8px;top:249.74px;font-size:13.3px;color:#000;letter-spacing:-0.4px;transform:translateX(-50%);">Fo</div>
<div class="b" style="left:1574.3px;top:129px;width:153px;height:138px;background:#fff;"></div>
<svg style="left:1575.3px;top:130px" width="151" height="114" viewBox="0 0 765 576"><rect width="765" height="576" fill="#000"/><use href="#plantThumb_blue" transform="translate(7,6)" filter="url(#grain)"/></svg>
<div class="b" style="left:1575.3px;top:244px;width:151px;height:22.2px;background:#00ffff;"></div>
<div class="t" style="left:1650.8px;top:249.74px;font-size:13.3px;color:#000;letter-spacing:-0.4px;transform:translateX(-50%);">Fo_gauss</div>
<div class="b" style="left:1728.2px;top:129px;width:153px;height:138px;background:#fff;"></div>
<svg style="left:1729.2px;top:130px" width="151" height="114" viewBox="0 0 765 576"><rect width="765" height="576" fill="#000"/><use href="#plantThumb_blue" transform="translate(7,6)" filter="url(#grain)"/></svg>
<div class="b" style="left:1729.2px;top:244px;width:151px;height:22.2px;background:#00ffff;"></div>
<div class="t" style="left:1804.7px;top:249.74px;font-size:13.3px;color:#000;letter-spacing:-0.4px;transform:translateX(-50%);">Fo_median</div>
<div class="b" style="left:1420.3px;top:301.7px;width:153px;height:138px;background:#fff;"></div>
<svg style="left:1421.3px;top:302.7px;" width="151" height="114" viewBox="0 0 765 576"><rect width="765" height="576" fill="#000"/><g transform="translate(7,6)"><use href="#plantMain" filter="url(#ylA)"/></g></svg>
<div class="b" style="left:1421.3px;top:416.7px;width:151px;height:22.2px;background:#00ffff;"></div>
<div class="t" style="left:1496.8px;top:422.44px;font-size:13.3px;color:#000;letter-spacing:-0.4px;transform:translateX(-50%);">Fm</div>
<div class="b" style="left:1574.3px;top:301.7px;width:153px;height:138px;background:#fff;"></div>
<svg style="left:1575.3px;top:302.7px;" width="151" height="114" viewBox="0 0 765 576"><rect width="765" height="576" fill="#000"/><g transform="translate(7,6)"><use href="#plantMain" filter="url(#ylB)"/></g></svg>
<div class="b" style="left:1575.3px;top:416.7px;width:151px;height:22.2px;background:#00ffff;"></div>
<div class="t" style="left:1650.8px;top:422.44px;font-size:13.3px;color:#000;letter-spacing:-0.4px;transform:translateX(-50%);">Fp</div>
<div class="b" style="left:1728.2px;top:301.7px;width:153px;height:138px;background:#fff;"></div>
<svg style="left:1729.2px;top:302.7px;" width="151" height="114" viewBox="0 0 765 576"><rect width="765" height="576" fill="#000"/><g transform="translate(7,6)"><use href="#plantMain" filter="url(#ylB)"/></g></svg>
<div class="b" style="left:1729.2px;top:416.7px;width:151px;height:22.2px;background:#00ffff;"></div>
<div class="t" style="left:1804.7px;top:422.44px;font-size:13.3px;color:#000;letter-spacing:-0.4px;transform:translateX(-50%);">Fp-median</div>
<div class="b" style="left:1420.3px;top:474.4px;width:153px;height:138px;background:#fff;"></div>
<svg style="left:1421.3px;top:475.4px;" width="151" height="114" viewBox="0 0 765 576"><rect width="765" height="576" fill="#000"/><g transform="translate(7,6)"><use href="#plantMain" filter="url(#ylA)"/></g></svg>
<div class="b" style="left:1421.3px;top:589.4px;width:151px;height:22.2px;background:#00ffff;"></div>
<div class="t" style="left:1496.8px;top:595.14px;font-size:13.3px;color:#000;letter-spacing:-0.4px;transform:translateX(-50%);">Fp-gauss</div>
<div class="b" style="left:1574.3px;top:474.4px;width:153px;height:138px;background:#fff;"></div>
<svg style="left:1575.3px;top:475.4px;" width="151" height="114" viewBox="0 0 765 576"><rect width="765" height="576" fill="#000"/><g transform="translate(7,6)"><use href="#plantMain" filter="url(#ylB)"/></g></svg>
<div class="b" style="left:1575.3px;top:589.4px;width:151px;height:22.2px;background:#00ffff;"></div>
<div class="t" style="left:1650.8px;top:595.14px;font-size:13.3px;color:#000;letter-spacing:-0.4px;transform:translateX(-50%);">Fp-average</div>
<div class="b" style="left:1728.2px;top:474.4px;width:153px;height:138px;background:#fff;"></div>
<svg style="left:1729.2px;top:475.4px;" width="151" height="114" viewBox="0 0 765 576"><rect width="765" height="576" fill="#000"/><g transform="translate(7,6)"><use href="#plantMain" filter="url(#ylA)"/></g></svg>
<div class="b" style="left:1729.2px;top:589.4px;width:151px;height:22.2px;background:#ff00ff;"></div>
<div class="t" style="left:1804.7px;top:595.14px;font-size:13.3px;color:#000;letter-spacing:-0.4px;transform:translateX(-50%);">Fm_L1</div>
<svg style="left:0;top:0" width="1920" height="1080"><path d="M1420.5,267.5 H1573.5 V439.5 H1420.5 Z" fill="none" stroke="#555" stroke-width="1.6" stroke-dasharray="1.6,2.4"/></svg>
<svg style="left:1424px;top:647px" width="21" height="21" viewBox="0 0 21 21">
<rect x="0.5" y="0.5" width="20" height="20" fill="#fff" stroke="#222" stroke-width="1.2"/>
<rect x="2" y="2" width="17" height="8" fill="#40c040"/>
<path d="M3,9 L6,3 L9,8 L12,4 L15,7 L18,3" fill="none" stroke="#ffd000" stroke-width="1.5"/>
<rect x="2" y="11" width="17" height="8" fill="#f0e0f0"/>
<path d="M3,16 L6,13 L9,17 L12,13 L15,16 L18,13" fill="none" stroke="#c02080" stroke-width="1.2"/>
</svg>
<div class="t" style="left:1553.5px;top:653.23px;font-size:14.5px;color:#1a1a1a;font-weight:bold;font-family:'Liberation Mono', monospace;transform:scaleY(0.88);transform-origin:0 85%;">Fm=average(frame,startFm,endFm)</div>
<div class="b" style="left:1419.5px;top:694.5px;width:123px;height:104px;border:1px solid #d8d8d8;border-radius:2px;"></div>
<div class="b" style="left:1427px;top:686.5px;width:79px;height:16px;background:#f0f0f0;"></div>
<div class="t" style="left:1430px;top:688.74px;font-size:13.3px;color:#000;letter-spacing:-0.3px;">Display Mode</div>
<svg style="left:1425.4px;top:712px" width="18" height="18" viewBox="0 0 18 18"><circle cx="9" cy="9" r="8" fill="#0067c0"/><circle cx="9" cy="9" r="3.5" fill="#fff"/></svg>
<div class="t" style="left:1449px;top:714.74px;font-size:13.3px;color:#000;letter-spacing:-0.45px;">Color by Pixel</div>
<svg style="left:1425.4px;top:741px" width="18" height="18" viewBox="0 0 18 18"><circle cx="9" cy="9" r="7.5" fill="#f2f2f2" stroke="#5a5a5a" stroke-width="1.1"/></svg>
<div class="t" style="left:1449px;top:743.74px;font-size:13.3px;color:#000;letter-spacing:-0.45px;">Color by Object</div>
<svg style="left:1425.4px;top:769.7px" width="18" height="18" viewBox="0 0 18 18"><circle cx="9" cy="9" r="7.5" fill="#f2f2f2" stroke="#5a5a5a" stroke-width="1.1"/></svg>
<div class="t" style="left:1449px;top:772.44px;font-size:13.3px;color:#000;letter-spacing:-0.45px;">Color by Avg</div>
<div class="b" style="left:1553.5px;top:692.5px;width:27.5px;height:27.5px;background:#fdfdfd;border:1px solid #dcdcdc;border-radius:3px;"></div>
<div class="b" style="left:1588px;top:692.5px;width:27.5px;height:27.5px;background:#fdfdfd;border:1px solid #dcdcdc;border-radius:3px;"></div>
<div class="b" style="left:1660px;top:692.5px;width:27.5px;height:27.5px;background:#fdfdfd;border:1px solid #dcdcdc;border-radius:3px;"></div>
<div class="b" style="left:1693px;top:692.5px;width:27.5px;height:27.5px;background:#fdfdfd;border:1px solid #dcdcdc;border-radius:3px;"></div>
<svg style="left:1557px;top:696px" width="21" height="21" viewBox="0 0 21 21">
<circle cx="9" cy="9" r="6.5" fill="none" stroke="#000" stroke-width="1.5"/><path d="M13.5,13.5 L18,18" stroke="#000" stroke-width="2"/><path d="M5.5,9 H12.5 M9,5.5 V12.5" stroke="#000" stroke-width="1.5"/></svg>
<svg style="left:1592px;top:696px" width="21" height="21" viewBox="0 0 21 21">
<circle cx="9" cy="9" r="6.5" fill="none" stroke="#000" stroke-width="1.5"/><path d="M13.5,13.5 L18,18" stroke="#000" stroke-width="2"/><path d="M5.5,9 H12.5" stroke="#000" stroke-width="1.5"/></svg>
<svg style="left:1663px;top:695px" width="22" height="22" viewBox="0 0 22 22">
<path d="M2,6 H8 L9,7.5 H14 V10" fill="#fff" stroke="#000" stroke-width="1.2"/>
<path d="M2,6 V18 L6,10 H20 L16,18 H2" fill="#d8c040" stroke="#000" stroke-width="1.2"/>
<path d="M12,5 C13,2 17,1.5 19,4 M19,4 L19.5,1.5 M19,4 L16.5,3.8" fill="none" stroke="#000" stroke-width="1.1"/>
</svg>
<svg style="left:1697px;top:696px" width="20" height="20" viewBox="0 0 20 20">
<rect x="2" y="2" width="16" height="16" fill="#000"/>
<rect x="5" y="3.5" width="10" height="5.5" fill="#e8d020"/>
<rect x="5" y="11.5" width="10" height="5.5" fill="#e8d020"/>
<rect x="10" y="13" width="3" height="3" fill="#000"/>
</svg>
<svg style="left:1554.5px;top:728.5px" width="17" height="17" viewBox="0 0 17 17"><rect x="0.5" y="0.5" width="16" height="16" rx="3" fill="#0067c0"/><path d="M4.5,8.5 L7,11 L12.5,5.5" fill="none" stroke="#fff" stroke-width="1.3"/></svg>
<div class="t" style="left:1579px;top:731.07px;font-size:13.5px;color:#000;letter-spacing:-0.45px;">Hide Background</div>
<div class="b" style="left:1687.5px;top:728.5px;width:35.5px;height:22px;background:#000;"></div>
<div class="b" style="left:1551.5px;top:768.5px;width:174px;height:203px;border:1px solid #d8d8d8;border-radius:2px;"></div>
<div class="b" style="left:1560px;top:760.5px;width:77px;height:16px;background:#f0f0f0;"></div>
<div class="t" style="left:1563px;top:762.74px;font-size:13.3px;color:#000;letter-spacing:-0.3px;">Value Range</div>
<svg style="left:1577px;top:787px" width="17" height="17" viewBox="0 0 17 17"><rect x="0.5" y="0.5" width="16" height="16" rx="3" fill="#0067c0"/><path d="M4.5,8.5 L7,11 L12.5,5.5" fill="none" stroke="#fff" stroke-width="1.3"/></svg>
<div class="t" style="left:1601px;top:788.57px;font-size:13.5px;color:#000;letter-spacing:-0.4px;">Group Color</div>
<svg style="left:1577px;top:816px" width="17" height="17" viewBox="0 0 17 17"><rect x="1" y="1" width="15" height="15" rx="3" fill="#f6f6f6" stroke="#5a5a5a" stroke-width="1.1"/></svg>
<div class="t" style="left:1601px;top:817.57px;font-size:13.5px;color:#000;letter-spacing:-0.45px;">Manual Color</div>
<div class="t" style="left:1563px;top:849.24px;font-size:13.3px;color:#000;letter-spacing:-0.5px;">Limit</div>
<div class="t" style="left:1610px;top:849.07px;font-size:13.5px;color:#000;letter-spacing:-0.3px;">20911.67</div>
<div class="t" style="left:1563px;top:883.74px;font-size:13.3px;color:#000;letter-spacing:-0.3px;">Max</div>
<div class="b" style="left:1611px;top:879.5px;width:103px;height:22.5px;background:#f0f0f0;border:1px solid #e2e2e2;"></div>
<div class="t" style="left:1614px;top:883.57px;font-size:13.5px;color:#7a7a7a;letter-spacing:-0.3px;">20911.67</div>
<div class="t" style="left:1563px;top:916.74px;font-size:13.3px;color:#000;letter-spacing:-0.3px;">Min</div>
<div class="b" style="left:1611px;top:912px;width:103px;height:22.5px;background:#f0f0f0;border:1px solid #e2e2e2;"></div>
<div class="t" style="left:1614px;top:916.57px;font-size:13.5px;color:#7a7a7a;">0</div>
<div class="t" style="left:1563px;top:949.24px;font-size:13.3px;color:#000;letter-spacing:-0.5px;">Limit</div>
<div class="t" style="left:1610px;top:949.07px;font-size:13.5px;color:#000;">0</div>
<div class="b" style="left:1419.5px;top:872.5px;width:123px;height:99px;border:1px solid #d8d8d8;border-radius:2px;"></div>
<div class="b" style="left:1427px;top:864.5px;width:49px;height:16px;background:#f0f0f0;"></div>
<div class="t" style="left:1430px;top:866.74px;font-size:13.3px;color:#000;letter-spacing:-0.3px;">Options</div>
<svg style="left:1426px;top:889.5px" width="17" height="17" viewBox="0 0 17 17"><rect x="0.5" y="0.5" width="16" height="16" rx="3" fill="#0067c0"/><path d="M4.5,8.5 L7,11 L12.5,5.5" fill="none" stroke="#fff" stroke-width="1.3"/></svg>
<div class="t" style="left:1450px;top:891.57px;font-size:13.5px;color:#000;letter-spacing:-0.45px;">Show Number</div>
<svg style="left:1426px;top:918px" width="17" height="17" viewBox="0 0 17 17"><rect x="0.5" y="0.5" width="16" height="16" rx="3" fill="#0067c0"/><path d="M4.5,8.5 L7,11 L12.5,5.5" fill="none" stroke="#fff" stroke-width="1.3"/></svg>
<div class="t" style="left:1450px;top:920.07px;font-size:13.5px;color:#000;letter-spacing:-0.45px;">Histogram</div>
<svg style="left:1426px;top:946.5px" width="17" height="17" viewBox="0 0 17 17"><rect x="1" y="1" width="15" height="15" rx="3" fill="#f6f6f6" stroke="#5a5a5a" stroke-width="1.1"/></svg>
<div class="t" style="left:1450px;top:949.07px;font-size:13.5px;color:#000;letter-spacing:-0.45px;">Checkpoint</div>
<div class="b" style="left:1737px;top:828px;width:168.5px;height:45px;background:#fdfdfd;border:1px solid #d8d8d8;border-radius:4px;"></div>
<svg style="left:1743px;top:839px" width="18" height="24" viewBox="0 0 18 24">
<path d="M6.5,3 V9 C3,10 2,13 2,15 C2,19 5,21 9,21 C13,21 16,19 16,15 C16,13 15,10 11.5,9 V3" fill="#fff" stroke="#000" stroke-width="1.4"/>
<path d="M5,2.5 H13" stroke="#000" stroke-width="1.6"/>
<path d="M3.5,14 C6,13 12,13 14.5,14 C15,18 13,20 9,20 C5,20 3,18 3.5,14Z" fill="#2020f0"/>
</svg>
<div class="t" style="left:1790px;top:843.46px;font-size:16px;color:#000;font-weight:bold;letter-spacing:-0.2px;">Analyze</div>
<div class="b" style="left:0px;top:1076px;width:1920px;height:2px;background:#fafafa;"></div>
</body></html>
